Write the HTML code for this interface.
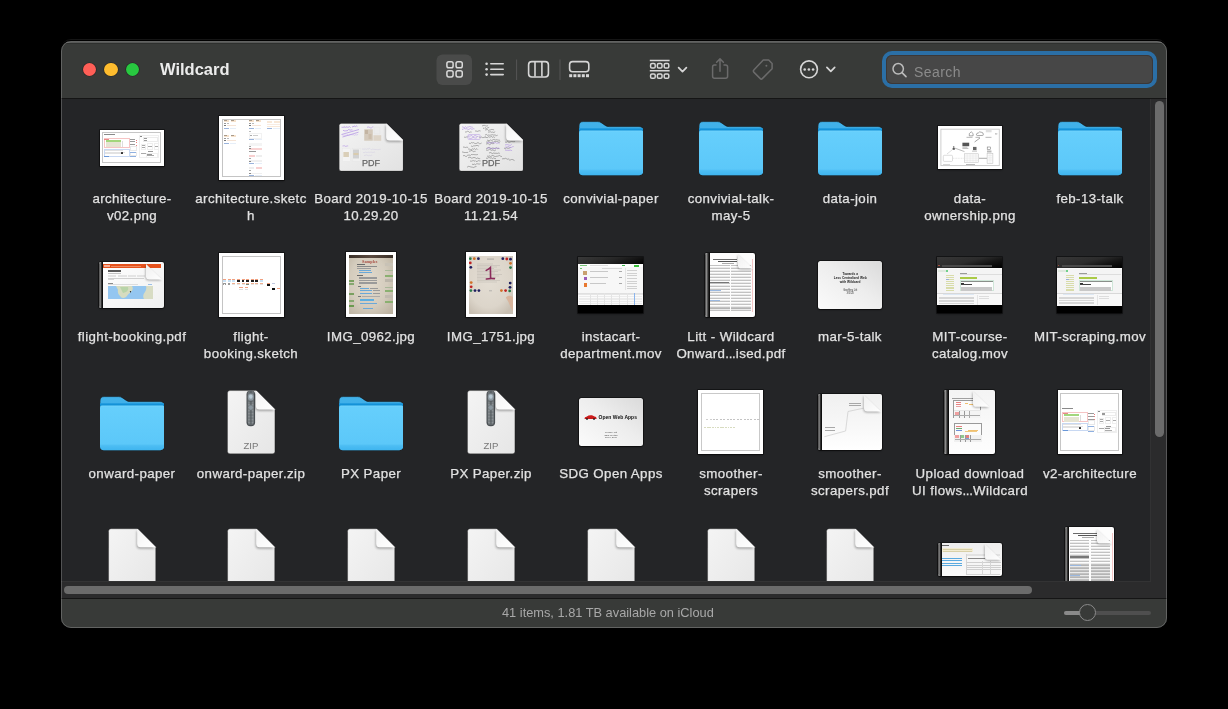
<!DOCTYPE html><html><head><meta charset="utf-8"><style>
html,body{margin:0;padding:0;background:#000;width:1228px;height:709px;overflow:hidden}
*{box-sizing:border-box}
body{font-family:"Liberation Sans",sans-serif;position:relative}
#win{position:absolute;left:61px;top:41px;width:1106px;height:587px;border-radius:10px;overflow:hidden;background:#242527;box-shadow:0 0 0 1px #000,0 -2px 0 0 #151515}
#wb{position:absolute;left:61px;top:41px;width:1106px;height:587px;border-radius:10px;border:1px solid rgba(255,255,255,0.21);pointer-events:none}
.a{position:absolute}
.ib{position:absolute;width:64px;height:64px}
.ib svg{display:block}
.th{position:absolute;overflow:hidden}
.el{letter-spacing:-0.4px;margin-right:0.6px}
.lb{position:absolute;width:118px;text-align:center;font-size:13.3px;letter-spacing:0.4px;line-height:17px;color:#e2e2e2;white-space:nowrap;-webkit-text-stroke:0.25px #e2e2e2;will-change:transform}
</style></head><body>
<div id="win">
<div class="a" style="left:0;top:0;width:1106px;height:57px;background:#383a38"></div>
<div class="a" style="left:0;top:1px;width:1106px;height:1px;background:rgba(255,255,255,0.16)"></div>
<div class="a" style="left:0;top:2px;width:1106px;height:1px;background:#2e302e"></div>
<div class="a" style="left:0;top:57px;width:1106px;height:1px;background:#151515"></div>
<div class="a" style="left:1089px;top:58px;width:17px;height:499px;background:#2b2b2c;border-left:1px solid #323233"></div>
<div class="a" style="left:0;top:540px;width:1106px;height:17px;background:#2b2b2c"></div>
<div class="a" style="left:0;top:540px;width:1090px;height:1px;background:#333334"></div>
<div class="a" style="left:0;top:557px;width:1106px;height:1px;background:#151515"></div>
<div class="a" style="left:0;top:558px;width:1106px;height:30px;background:#383a38"></div>
</div>
<div class="a" style="left:82.7px;top:62.9px;width:13.6px;height:13.6px;border-radius:50%;background:#ff5f57;box-shadow:0 0 0 0.6px rgba(0,0,0,0.35)"></div>
<div class="a" style="left:104.4px;top:62.9px;width:13.6px;height:13.6px;border-radius:50%;background:#febc2e;box-shadow:0 0 0 0.6px rgba(0,0,0,0.35)"></div>
<div class="a" style="left:125.9px;top:62.9px;width:13.6px;height:13.6px;border-radius:50%;background:#28c840;box-shadow:0 0 0 0.6px rgba(0,0,0,0.35)"></div>
<div class="a" style="left:160px;top:60px;font-size:16.5px;font-weight:bold;color:#ececec;line-height:19px;will-change:transform">Wildcard</div>
<svg class="a" style="left:0;top:0" width="1228" height="110" viewBox="0 0 1228 110">
<rect x="436.5" y="54.5" width="35.5" height="30.5" rx="6" fill="#4a4b4a"/>
<g fill="none" stroke="#dadada" stroke-width="1.5">
<rect x="446.9" y="61.65" width="6.2" height="6.2" rx="1.8"/><rect x="456.05" y="61.65" width="6.2" height="6.2" rx="1.8"/>
<rect x="446.9" y="70.7" width="6.2" height="6.2" rx="1.8"/><rect x="456.05" y="70.7" width="6.2" height="6.2" rx="1.8"/>
</g>
<g fill="#d6d6d6"><circle cx="486.6" cy="63.7" r="1.3"/><circle cx="486.6" cy="69.2" r="1.3"/><circle cx="486.6" cy="74.6" r="1.3"/></g>
<g stroke="#d6d6d6" stroke-width="1.6" stroke-linecap="round"><path d="M490.8,63.7 H503.2 M490.8,69.2 H503.2 M490.8,74.6 H503.2"/></g>
<path d="M516.6,59.5 V80" stroke="#555" stroke-width="1"/>
<path d="M560,59.5 V80" stroke="#555" stroke-width="1"/>
<g fill="none" stroke="#d6d6d6" stroke-width="1.6">
<rect x="528.6" y="61.6" width="19.8" height="15.4" rx="3.2"/><path d="M535,62 V76.6 M541.9,62 V76.6"/>
<rect x="569.6" y="61.6" width="19.2" height="10.2" rx="3"/>
</g>
<g fill="#d6d6d6"><rect x="569.2" y="74.2" width="3" height="3"/><rect x="573.4" y="74.2" width="3" height="3"/><rect x="577.6" y="74.2" width="3" height="3"/><rect x="581.8" y="74.2" width="3" height="3"/><rect x="586" y="74.2" width="3" height="3"/></g>
<g fill="none" stroke="#d6d6d6" stroke-width="1.5">
<path d="M649.8,60.4 H669.6 M649.8,70.7 H669.6"/>
<rect x="650.6" y="63.6" width="4.6" height="4.4" rx="1.3"/><rect x="657.4" y="63.6" width="4.6" height="4.4" rx="1.3"/><rect x="664.2" y="63.6" width="4.6" height="4.4" rx="1.3"/>
<rect x="650.6" y="73.9" width="4.6" height="4.4" rx="1.3"/><rect x="657.4" y="73.9" width="4.6" height="4.4" rx="1.3"/><rect x="664.2" y="73.9" width="4.6" height="4.4" rx="1.3"/>
</g>
<path d="M678.6,67.6 L682.5,71.6 L686.4,67.6" fill="none" stroke="#d6d6d6" stroke-width="1.7" stroke-linecap="round" stroke-linejoin="round"/>
<g fill="none" stroke="#6b6b6b" stroke-width="1.5" stroke-linecap="round" stroke-linejoin="round">
<path d="M716,65 H714.5 Q712.6,65 712.6,67 V76.2 Q712.6,78.2 714.5,78.2 H725.5 Q727.6,78.2 727.6,76.2 V67 Q727.6,65 725.5,65 H724"/>
<path d="M720,71.3 V59 M716.6,62.3 L720,58.9 L723.4,62.3"/>
<path d="M763.3,60.1 L768.7,60.1 L772.1,63.6 L772.1,68.8 L762.3,78.6 Q761.3,79.6 760.3,78.6 L753.8,72.1 Q752.8,71.1 753.8,70.1 Z"/>
</g>
<circle cx="766.4" cy="65.7" r="1" fill="#6b6b6b"/>
<circle cx="809" cy="69.3" r="8.4" fill="none" stroke="#d6d6d6" stroke-width="1.6"/>
<g fill="#d6d6d6"><circle cx="804.7" cy="69.5" r="1.3"/><circle cx="808.9" cy="69.5" r="1.3"/><circle cx="813.1" cy="69.5" r="1.3"/></g>
<path d="M826.9,67.4 L830.8,71.3 L834.7,67.4" fill="none" stroke="#d6d6d6" stroke-width="1.7" stroke-linecap="round" stroke-linejoin="round"/>
</svg>
<div class="a" style="left:882px;top:51px;width:275px;height:37px;border-radius:10px;background:#2b6fa6"></div>
<div class="a" style="left:886px;top:55px;width:267px;height:29px;border-radius:6px;background:#474747;box-shadow:inset 0 0 0 1px #3b3838"></div>
<svg class="a" style="left:888px;top:58px" width="24" height="24" viewBox="888 58 24 24"><circle cx="898.2" cy="68.8" r="5.2" fill="none" stroke="#bcbcbc" stroke-width="1.5"/><path d="M902,72.6 L906,76.6" stroke="#bcbcbc" stroke-width="1.6" stroke-linecap="round"/></svg>
<div class="a" style="left:913.8px;top:63.5px;font-size:14px;letter-spacing:0.45px;line-height:17px;color:#8b8b8b;will-change:transform">Search</div>
<div class="a" style="left:1155px;top:101px;width:9px;height:336px;border-radius:4.5px;background:#6b6b6b"></div>
<div class="a" style="left:64.3px;top:585.8px;width:968px;height:8.5px;border-radius:4.25px;background:#6b6b6b"></div>
<div class="a" style="left:502px;top:605px;font-size:12.8px;line-height:16px;color:#a8a8a8;will-change:transform">41 items, 1.81 TB available on iCloud</div>
<div class="a" style="left:1063.5px;top:610.8px;width:87px;height:4px;border-radius:2px;background:#4f4f4f"></div>
<div class="a" style="left:1063.5px;top:610.8px;width:24px;height:4px;border-radius:2px;background:#8a8a8a"></div>
<div class="a" style="left:1078.5px;top:604.3px;width:17px;height:17px;border-radius:50%;background:#383a38;border:1.5px solid #8a8a8a"></div>
<div class="a" style="left:62px;top:99px;width:1088px;height:482px;overflow:hidden">
<div class="th" style="left:37.8px;top:30.7px;width:64.1px;height:36.3px;background:#fff;box-shadow:0 0 0 0.8px rgba(0,0,0,0.55),0 1px 2px rgba(0,0,0,0.45);"><div style="position:absolute;left:2.7px;top:2.7px;right:2.7px;bottom:2.7px;border:1.0px solid #c6c6c6"></div><div style="position:absolute;left:4.3px;top:4.0px;width:10.9px;height:1.2px;background:#8a8a8a"></div><div style="position:absolute;left:4.3px;top:8.4px;width:25.5px;height:10px;border:1px solid #f6c4c4"></div><div style="position:absolute;left:4.6px;top:9.0px;width:5px;height:0.8px;background:#e88a8a"></div><div style="position:absolute;left:6.2px;top:10.5px;width:15.2px;height:1.7px;background:#a2d67c"></div><div style="position:absolute;left:6.2px;top:12.6px;width:15.2px;height:5px;background:#e6e4d2"></div><div style="position:absolute;left:22.3px;top:10.9px;width:1px;height:6px;background:#ddd"></div><div style="position:absolute;left:4.3px;top:19.0px;width:25.5px;height:8.6px;border:1px solid #c8d8f2"></div><div style="position:absolute;left:5.3px;top:20.4px;width:18px;height:0.5px;background:#e2e2e2"></div><div style="position:absolute;left:5.3px;top:21.9px;width:20px;height:0.5px;background:#e2e2e2"></div><div style="position:absolute;left:5.3px;top:23.4px;width:17px;height:0.5px;background:#e2e2e2"></div><div style="position:absolute;left:21.1px;top:22.7px;width:2.2px;height:2.1px;background:#222;border-radius:40%"></div><div style="position:absolute;left:4.6px;top:26.3px;width:5px;height:0.8px;background:#6a98d8"></div><div style="position:absolute;left:30.1px;top:9.3px;width:5.5px;height:0.8px;background:#9a9a9a"></div><div style="position:absolute;left:35.8px;top:9.9px;width:1.5px;height:0.5px;background:#e88080"></div><div style="position:absolute;left:30.1px;top:11.8px;width:5.5px;height:0.8px;background:#9a9a9a"></div><div style="position:absolute;left:35.8px;top:12.4px;width:1.5px;height:0.5px;background:#e88080"></div><div style="position:absolute;left:30.1px;top:14.6px;width:5.5px;height:0.8px;background:#9a9a9a"></div><div style="position:absolute;left:35.8px;top:15.2px;width:1.5px;height:0.5px;background:#e88080"></div><div style="position:absolute;left:30.3px;top:16.2px;width:7px;height:5px;border:1px solid #e8e8e8"></div><div style="position:absolute;left:30.3px;top:22.1px;width:7px;height:4.6px;border:1px solid #e8e8e8"></div><div style="position:absolute;left:30.3px;top:22.3px;width:6px;height:0.5px;background:#8fb0e0"></div><div style="position:absolute;left:30.3px;top:26.7px;width:6px;height:0.5px;background:#8fb0e0"></div><div style="position:absolute;left:39.4px;top:5.6px;width:19.6px;height:23px;border:1px solid #efefef"></div><div style="position:absolute;left:40.3px;top:6.7px;width:2px;height:0.7px;background:#888"></div><div style="position:absolute;left:43.6px;top:7.7px;width:14.6px;height:4.6px;border:1px solid #ececec"></div><div style="position:absolute;left:44.3px;top:8.7px;width:3px;height:0.6px;background:#999"></div><div style="position:absolute;left:44.3px;top:10.0px;width:2.5px;height:0.6px;background:#999"></div><div style="position:absolute;left:41.3px;top:13.9px;width:5px;height:6.5px;border:1px solid #eeeeee"></div><div style="position:absolute;left:41.8px;top:15.4px;width:3.5px;height:0.6px;background:#aaa"></div><div style="position:absolute;left:41.8px;top:17.4px;width:3.5px;height:0.6px;background:#aaa"></div><div style="position:absolute;left:47.3px;top:13.4px;width:6px;height:7px;border:1px solid #eeeeee"></div><div style="position:absolute;left:48.3px;top:16.2px;width:4px;height:0.6px;background:#aaa"></div><div style="position:absolute;left:54.3px;top:13.4px;width:4.5px;height:7px;border:1px solid #eeeeee"></div><div style="position:absolute;left:54.8px;top:16.4px;width:3px;height:0.6px;background:#aaa"></div><div style="position:absolute;left:48.3px;top:21.6px;width:4.5px;height:0.7px;background:#999"></div><div style="position:absolute;left:40.8px;top:23.7px;width:5px;height:0.6px;background:#aaa"></div><div style="position:absolute;left:46.0px;top:23.0px;width:12.5px;height:5px;border:1px solid #eeeeee"></div><div style="position:absolute;left:46.8px;top:24.4px;width:5px;height:0.6px;background:#999"></div><div style="position:absolute;left:46.8px;top:25.8px;width:7px;height:0.6px;background:#aaa"></div></div>
<div class="th" style="left:157.2px;top:16.5px;width:64.8px;height:64.4px;background:#fff;box-shadow:0 0 0 0.8px rgba(0,0,0,0.55),0 1px 2px rgba(0,0,0,0.45);"><div style="position:absolute;left:3.0px;top:3.0px;right:3.0px;bottom:3.0px;border:1.0px solid #c4c4c4"></div><div style="position:absolute;left:4.9px;top:4.4px;width:5px;height:2.2px;background:#f6e2cc"></div><div style="position:absolute;left:11.4px;top:4.4px;width:5.5px;height:2.2px;background:#f6e2cc"></div><div style="position:absolute;left:4.9px;top:4.7px;width:2.5px;height:0.6px;background:#a89a8a"></div><div style="position:absolute;left:11.4px;top:4.7px;width:3px;height:0.6px;background:#a89a8a"></div><div style="position:absolute;left:4.9px;top:7.6000000000000005px;width:1.5px;height:0.6px;background:#999"></div><div style="position:absolute;left:7.9px;top:7.6000000000000005px;width:2px;height:0.6px;background:#bbb"></div><div style="position:absolute;left:4.9px;top:9.7px;width:1.6px;height:1.2px;background:#777"></div><div style="position:absolute;left:7.4px;top:9.7px;width:9.5px;height:1.2px;background:#f6e4d6"></div><div style="position:absolute;left:4.9px;top:12.700000000000001px;width:5px;height:1.1px;background:#9bb4dc"></div><div style="position:absolute;left:10.4px;top:12.700000000000001px;width:6.5px;height:1.1px;background:#e6eef8"></div><div style="position:absolute;left:4.9px;top:19.3px;width:5px;height:2.2px;background:#f6e2cc"></div><div style="position:absolute;left:11.4px;top:19.3px;width:5.5px;height:2.2px;background:#f6e2cc"></div><div style="position:absolute;left:4.9px;top:19.6px;width:2.5px;height:0.6px;background:#a89a8a"></div><div style="position:absolute;left:11.4px;top:19.6px;width:3px;height:0.6px;background:#a89a8a"></div><div style="position:absolute;left:4.9px;top:22.5px;width:1.5px;height:0.6px;background:#999"></div><div style="position:absolute;left:7.9px;top:22.5px;width:2px;height:0.6px;background:#bbb"></div><div style="position:absolute;left:4.9px;top:24.6px;width:1.6px;height:1.2px;background:#777"></div><div style="position:absolute;left:7.4px;top:24.6px;width:9.5px;height:1.2px;background:#f6e4d6"></div><div style="position:absolute;left:4.9px;top:27.6px;width:5px;height:1.1px;background:#9bb4dc"></div><div style="position:absolute;left:10.4px;top:27.6px;width:6.5px;height:1.1px;background:#e6eef8"></div><div style="position:absolute;left:30px;top:4.4px;width:5px;height:2.2px;background:#f6e2cc"></div><div style="position:absolute;left:36.5px;top:4.4px;width:5.5px;height:2.2px;background:#f6e2cc"></div><div style="position:absolute;left:30px;top:4.7px;width:2.5px;height:0.6px;background:#a89a8a"></div><div style="position:absolute;left:36.5px;top:4.7px;width:3px;height:0.6px;background:#a89a8a"></div><div style="position:absolute;left:30px;top:7.6000000000000005px;width:1.5px;height:0.6px;background:#999"></div><div style="position:absolute;left:33px;top:7.6000000000000005px;width:2px;height:0.6px;background:#bbb"></div><div style="position:absolute;left:30px;top:9.7px;width:1.6px;height:1.2px;background:#777"></div><div style="position:absolute;left:32.5px;top:9.7px;width:9.5px;height:1.2px;background:#f6e4d6"></div><div style="position:absolute;left:30px;top:12.700000000000001px;width:5px;height:1.1px;background:#9bb4dc"></div><div style="position:absolute;left:35.5px;top:12.700000000000001px;width:6.5px;height:1.1px;background:#e6eef8"></div><div style="position:absolute;left:30px;top:15.5px;width:2px;height:0.6px;background:#bbb"></div><div style="position:absolute;left:30px;top:17.8px;width:12.5px;height:6px;border:1px solid #f2f2f2"></div><div style="position:absolute;left:31px;top:19.6px;width:2px;height:0.6px;background:#aaa"></div><div style="position:absolute;left:34px;top:19.6px;width:5px;height:0.6px;background:#ccc"></div><div style="position:absolute;left:30px;top:23.6px;width:5px;height:1.1px;background:#9bb4dc"></div><div style="position:absolute;left:35.5px;top:23.6px;width:7px;height:1.1px;background:#e6eef8"></div><div style="position:absolute;left:30px;top:27px;width:12.5px;height:3.2px;background:#f4f4f4"></div><div style="position:absolute;left:30px;top:30.8px;width:2px;height:0.6px;background:#aaa"></div><div style="position:absolute;left:30px;top:32.3px;width:12.5px;height:1.8px;background:#f8d4d4"></div><div style="position:absolute;left:30px;top:32.5px;width:2px;height:1px;background:#888"></div><div style="position:absolute;left:30px;top:35.3px;width:7px;height:0.7px;background:#999"></div><div style="position:absolute;left:30px;top:39.6px;width:5.5px;height:2.2px;background:#f8d0d0"></div><div style="position:absolute;left:36.5px;top:39.6px;width:6px;height:2.2px;background:#eeeeee"></div><div style="position:absolute;left:30px;top:42.6px;width:2px;height:0.6px;background:#aaa"></div><div style="position:absolute;left:30px;top:44.8px;width:12.5px;height:1.6px;background:#f0f0f0"></div><div style="position:absolute;left:30px;top:45px;width:2px;height:1px;background:#888"></div><div style="position:absolute;left:30px;top:47.6px;width:5px;height:0.9px;background:#9bb4dc"></div><div style="position:absolute;left:35.5px;top:47.6px;width:7px;height:0.9px;background:#e6eef8"></div><div style="position:absolute;left:30px;top:51.8px;width:5px;height:2.2px;background:#eeeeee"></div><div style="position:absolute;left:36.5px;top:51.8px;width:6px;height:2.2px;background:#f8d0d0"></div><div style="position:absolute;left:30px;top:54.8px;width:2px;height:0.6px;background:#aaa"></div><div style="position:absolute;left:30px;top:57px;width:12.5px;height:1.6px;background:#f0f0f0"></div><div style="position:absolute;left:30px;top:57.2px;width:2px;height:1px;background:#888"></div><div style="position:absolute;left:30px;top:59.8px;width:5px;height:0.9px;background:#9bb4dc"></div><div style="position:absolute;left:35.5px;top:59.8px;width:7px;height:0.9px;background:#e6eef8"></div><div style="position:absolute;left:48.2px;top:5px;width:5px;height:2px;background:#f8e8d8"></div><div style="position:absolute;left:54.5px;top:5px;width:6px;height:2px;background:#f8e8d8"></div><div style="position:absolute;left:48.2px;top:8px;width:12.5px;height:1.2px;background:#f8ece2"></div><div style="position:absolute;left:48.2px;top:10px;width:12.5px;height:1.5px;background:#f8e8d8"></div><div style="position:absolute;left:48.2px;top:12.2px;width:5px;height:1px;background:#9bb4dc"></div><div style="position:absolute;left:53.5px;top:12.2px;width:7px;height:1px;background:#e6eef8"></div></div>
<div class="ib" style="left:277.1px;top:16.3px"><svg width="64" height="64" viewBox="0 0 64 64"><defs><linearGradient id="pg" x1="0" y1="0" x2="1" y2="1"><stop offset="0" stop-color="#f4f4f4"/><stop offset="1" stop-color="#e6e6e6"/></linearGradient>
<linearGradient id="fold" x1="0" y1="0" x2="1" y2="1"><stop offset="0" stop-color="#f2f2f2"/><stop offset="0.6" stop-color="#fbfbfb"/><stop offset="1" stop-color="#ffffff"/></linearGradient>
<filter id="fs" x="-50%" y="-50%" width="200%" height="200%"><feGaussianBlur stdDeviation="1.1"/></filter>
<linearGradient id="bp" x1="0" y1="0" x2="1" y2="1"><stop offset="0" stop-color="#f4f4f4"/><stop offset="1" stop-color="#e2e2e2"/></linearGradient></defs>
<path d="M2.4000000000000004,8.4 L47.099999999999994,8.4 L64.3,25.6 L64.3,53.9 Q64.3,56.1 62.099999999999994,56.1 L2.4000000000000004,56.1 Q0.2,56.1 0.2,53.9 L0.2,10.600000000000001 Q0.2,8.4 2.4000000000000004,8.4 Z" fill="url(#bp)" stroke="#111" stroke-opacity="0.35" stroke-width="0.8"/>
<g opacity="0.9"><path d="M2.5,12.2 L3.3,12.3 L4.3,12.4 L5.3,11.5 L6.0,12.7 L6.9,11.8 L8.2,12.2 L9.4,12.2 L10.5,11.6 L11.6,12.8" fill="none" stroke="#9a6ee0" stroke-width="0.6"/><path d="M13.0,11.6 L14.0,12.0 L15.1,10.9 L16.3,11.7 L17.2,10.8 L18.4,11.6" fill="none" stroke="#9a6ee0" stroke-width="0.6"/><path d="M4.0,15.2 L5.1,15.8 L6.3,15.9 L7.2,15.7 L8.2,15.9 L9.4,14.6 L10.2,14.7 L11.5,15.1 L12.5,14.9 L13.5,15.0" fill="none" stroke="#9a6ee0" stroke-width="0.6"/><path d="M2.5,19.5 L20,14.5 M3.5,22 L19.5,17.2" stroke="#9a6ee0" stroke-width="0.6" fill="none"/><path d="M3.0,19.8 L3.9,19.9 L5.0,20.2 L6.1,20.2 L7.3,20.3 L8.4,19.5 L9.6,20.3 L10.8,19.9 L12.0,19.5 L13.2,19.9 L14.0,19.4 L15.3,20.3 L16.0,20.1 L17.0,19.5 L17.8,20.1 L19.1,19.3" fill="none" stroke="#b090e8" stroke-width="0.4"/><path d="M28.0,12.4 L29.1,11.9 L30.2,12.2 L31.4,12.9 L32.4,12.9 L33.3,12.0 L34.4,11.9" fill="none" stroke="#9a6ee0" stroke-width="0.5"/><rect x="25.2" y="14.3" width="8.6" height="11.4" fill="#d2c6b6"/><rect x="26" y="15" width="3" height="4" fill="#bfae9a"/><rect x="29.5" y="19" width="3" height="5" fill="#c8b8a4"/><rect x="34.4" y="20.2" width="7.8" height="5.6" fill="#dcd2c4"/><rect x="35" y="12" width="6" height="7" fill="#ececec" stroke="#ddd" stroke-width="0.3"/><path d="M3.5,31.0 L4.3,30.9 L5.4,30.7 L6.1,31.3 L7.0,31.4 L8.2,30.9 L9.2,31.0" fill="none" stroke="#9a6ee0" stroke-width="0.5"/><rect x="3.4" y="33.5" width="8" height="13" fill="#f4f4f4" stroke="#e0e0e0" stroke-width="0.3"/><rect x="4.4" y="37" width="5.5" height="5" fill="#d8ccb4"/><rect x="13.2" y="33.5" width="8" height="13" fill="#f0f0f0" stroke="#e0e0e0" stroke-width="0.3"/><rect x="14" y="34.5" width="6" height="9" fill="#cfcfcf"/><rect x="14.5" y="38" width="5" height="2" fill="#d8c8a8"/><path d="M23.0,34.0 L24.1,34.1 L25.1,34.1 L26.4,34.0 L27.3,34.3 L28.2,33.8 L29.5,34.0 L30.5,33.4 L31.5,34.1" fill="none" stroke="#c4bce0" stroke-width="0.35"/><path d="M32.0,34.5 L32.7,34.6 L33.8,34.0 L34.9,34.5 L36.0,34.3 L37.1,34.8 L37.8,34.0 L38.9,35.1 L39.8,34.4 L40.8,34.3 L41.7,34.3" fill="none" stroke="#c4bce0" stroke-width="0.35"/><path d="M24.0,37.5 L24.9,37.6 L25.8,37.4 L27.0,36.9 L28.0,37.8 L28.9,37.2 L30.1,37.2 L30.9,37.4 L32.0,37.0 L32.9,37.3 L34.1,37.4 L35.3,37.1 L36.2,37.7" fill="none" stroke="#c4bce0" stroke-width="0.35"/><path d="M25.0,40.5 L26.2,40.4 L27.1,40.0 L28.1,40.1 L29.3,40.9 L30.1,40.2 L31.3,40.7 L32.4,40.3 L33.2,40.3" fill="none" stroke="#c4bce0" stroke-width="0.35"/></g>
<path d="M47.099999999999994,8.4 L47.099999999999994,22.1 Q47.099999999999994,25.6 50.599999999999994,25.6 L64.3,25.6 Z" fill="#000" opacity="0.30" filter="url(#fs)" transform="translate(-0.6,1.4)"/><path d="M47.099999999999994,8.4 L47.099999999999994,22.1 Q47.099999999999994,25.6 50.599999999999994,25.6 L64.3,25.6 Z" fill="url(#fold)"/><path d="M47.39999999999999,8.700000000000001 L64.0,25.3" stroke="#fff" stroke-width="0.8"/>
<text x="32.0" y="51.2" text-anchor="middle" font-family="Liberation Sans" font-size="9.0" fill="#666" stroke="#666" stroke-width="0.25">PDF</text>
</svg></div>
<div class="ib" style="left:396.9px;top:16.3px"><svg width="64" height="64" viewBox="0 0 64 64"><defs><linearGradient id="pg" x1="0" y1="0" x2="1" y2="1"><stop offset="0" stop-color="#f4f4f4"/><stop offset="1" stop-color="#e6e6e6"/></linearGradient>
<linearGradient id="fold" x1="0" y1="0" x2="1" y2="1"><stop offset="0" stop-color="#f2f2f2"/><stop offset="0.6" stop-color="#fbfbfb"/><stop offset="1" stop-color="#ffffff"/></linearGradient>
<filter id="fs" x="-50%" y="-50%" width="200%" height="200%"><feGaussianBlur stdDeviation="1.1"/></filter>
<linearGradient id="bp" x1="0" y1="0" x2="1" y2="1"><stop offset="0" stop-color="#f4f4f4"/><stop offset="1" stop-color="#e2e2e2"/></linearGradient></defs>
<path d="M2.4000000000000004,8.4 L47.099999999999994,8.4 L64.3,25.6 L64.3,53.9 Q64.3,56.1 62.099999999999994,56.1 L2.4000000000000004,56.1 Q0.2,56.1 0.2,53.9 L0.2,10.600000000000001 Q0.2,8.4 2.4000000000000004,8.4 Z" fill="url(#bp)" stroke="#111" stroke-opacity="0.35" stroke-width="0.8"/>
<g opacity="0.85"><path d="M23.0,11.0 L24.1,10.5 L25.4,10.4 L26.6,10.8 L27.5,11.0 L28.3,10.9 L29.1,10.4" fill="none" stroke="#505050" stroke-width="0.5"/><path d="M24.0,13.0 L25.1,13.5 L26.0,12.6 L27.3,13.6 L28.6,12.9 L30.2,12.4" fill="none" stroke="#505050" stroke-width="0.5"/><path d="M26.0,15.0 L27.5,14.7 L28.4,14.5 L29.4,15.4 L30.4,15.1 L31.7,14.8 L32.9,14.4 L33.8,14.6 L35.1,14.9" fill="none" stroke="#505050" stroke-width="0.5"/><path d="M29.0,17.0 L30.1,17.1 L31.2,16.7 L32.6,17.3 L33.6,17.1 L34.9,17.5 L36.2,16.7" fill="none" stroke="#505050" stroke-width="0.5"/><path d="M26.0,20.0 L27.6,19.5 L28.7,20.4 L29.6,20.0 L30.5,20.2 L31.9,20.1 L33.4,19.7 L34.7,20.1 L36.0,19.9 L37.5,20.6 L38.7,20.2" fill="none" stroke="#505050" stroke-width="0.5"/><path d="M26.0,22.0 L26.8,22.3 L28.2,22.7 L29.6,21.7 L30.7,22.2 L31.6,21.9 L32.5,21.5 L33.3,22.4 L34.2,21.6 L35.3,22.5 L36.2,21.9" fill="none" stroke="#505050" stroke-width="0.5"/><path d="M28.0,25.0 L29.2,25.5 L30.7,25.5 L31.7,24.9 L32.8,25.5 L34.4,24.5 L35.3,24.6 L36.3,25.0 L37.6,24.7 L38.4,24.9 L39.5,25.1 L41.0,25.3" fill="none" stroke="#505050" stroke-width="0.5"/><path d="M27.0,27.0 L28.2,27.2 L29.6,26.4 L31.1,27.4 L32.6,27.4 L33.7,26.9 L34.6,27.2 L35.4,26.4 L36.4,26.5 L37.5,26.4 L38.3,26.5 L39.1,26.8 L40.0,27.5 L41.3,26.5" fill="none" stroke="#505050" stroke-width="0.5"/><path d="M27.0,29.0 L28.0,28.8 L29.1,28.5 L30.6,29.7 L31.7,29.0 L32.6,28.4 L33.7,28.7 L35.2,28.5" fill="none" stroke="#505050" stroke-width="0.5"/><path d="M27.0,33.0 L27.8,33.6 L29.0,32.5 L30.3,32.3 L31.5,33.7 L33.0,33.3 L34.0,32.8 L34.9,33.4 L36.2,33.4 L37.2,32.6 L38.7,33.7 L40.2,33.4" fill="none" stroke="#505050" stroke-width="0.5"/><path d="M27.0,35.0 L28.5,35.3 L29.4,35.0 L30.5,34.3 L31.3,34.7 L32.4,35.3 L33.9,34.9 L35.5,35.7 L37.0,34.8" fill="none" stroke="#505050" stroke-width="0.5"/><path d="M30.0,38.0 L31.0,37.6 L31.9,37.6 L33.2,38.6 L34.7,38.0 L36.0,38.4 L36.9,38.2 L38.4,38.4 L39.8,38.0 L40.8,38.4" fill="none" stroke="#505050" stroke-width="0.5"/><path d="M28.0,41.0 L29.1,41.4 L30.6,40.9 L31.8,41.6 L33.1,40.5 L34.0,40.5 L35.6,41.4 L36.5,41.5 L38.1,41.2 L39.2,41.1 L40.1,40.3 L41.6,41.2 L42.9,41.6" fill="none" stroke="#505050" stroke-width="0.5"/><path d="M27.0,43.0 L28.1,43.5 L29.6,42.6 L30.6,42.7 L31.6,43.1 L32.6,42.9 L33.5,43.6 L34.6,42.9 L35.9,43.6 L37.0,43.6" fill="none" stroke="#505050" stroke-width="0.5"/><path d="M6.0,17.0 L7.2,17.0 L8.4,16.3 L9.6,16.6 L10.4,17.4 L11.3,17.0 L12.7,17.1" fill="none" stroke="#505050" stroke-width="0.5"/><path d="M16.0,16.0 L17.1,16.0 L18.3,16.4 L19.2,16.1 L20.2,15.7 L21.6,16.0" fill="none" stroke="#505050" stroke-width="0.5"/><path d="M5.0,22.0 L6.2,22.4 L7.8,21.9 L9.1,22.0" fill="none" stroke="#505050" stroke-width="0.5"/><path d="M20.0,22.0 L21.2,22.3 L22.4,22.0 L23.6,22.6 L24.9,22.5 L26.5,21.7" fill="none" stroke="#505050" stroke-width="0.5"/><path d="M10.0,28.0 L11.2,28.6 L12.7,27.5 L13.6,27.9 L14.5,27.6 L15.3,28.2 L16.8,28.6 L17.7,28.3 L19.0,27.5 L20.5,28.7 L21.5,28.6 L22.6,28.0" fill="none" stroke="#505050" stroke-width="0.5"/><path d="M12.0,31.0 L13.6,31.5 L14.5,30.9 L15.7,30.8 L16.7,30.7 L18.1,30.3 L19.3,30.9 L20.1,30.8" fill="none" stroke="#505050" stroke-width="0.5"/><path d="M9.0,34.0 L10.3,34.0 L11.2,34.7 L12.6,34.7 L13.5,33.7 L14.3,34.4 L15.3,33.5 L16.5,34.6 L17.9,33.7 L18.8,34.6" fill="none" stroke="#505050" stroke-width="0.5"/><path d="M10.0,36.0 L11.3,36.3 L12.1,35.4 L13.5,35.9 L14.3,36.6 L15.6,36.4 L16.5,36.5" fill="none" stroke="#505050" stroke-width="0.5"/><path d="M8.0,40.0 L8.9,40.5 L10.0,39.8 L11.3,40.6 L12.3,39.5 L13.5,39.6 L14.4,39.5 L15.2,39.6 L16.3,39.7 L17.7,39.7 L18.9,39.5" fill="none" stroke="#505050" stroke-width="0.5"/><path d="M9.0,43.0 L10.1,42.3 L11.1,42.3 L12.5,43.1 L13.4,43.0 L15.0,42.4 L16.4,42.9 L17.6,43.5 L18.7,43.0 L20.1,43.7 L21.2,43.5" fill="none" stroke="#505050" stroke-width="0.5"/><path d="M11.0,46.0 L12.4,46.2 L13.5,45.8 L14.3,45.5 L15.2,46.3 L16.2,45.5 L17.1,46.5 L18.6,46.2 L19.6,45.6 L20.6,45.9 L21.5,45.9" fill="none" stroke="#505050" stroke-width="0.5"/><path d="M13.0,49.0 L14.0,49.6 L15.6,49.1 L16.6,49.7 L17.6,48.8 L18.4,48.8 L19.6,49.0 L20.6,49.0 L21.4,48.7" fill="none" stroke="#505050" stroke-width="0.5"/><path d="M8.0,52.0 L8.9,51.9 L9.7,51.3 L10.7,51.6 L12.0,52.0 L13.4,52.2 L14.8,52.5 L15.9,51.8 L17.5,51.5" fill="none" stroke="#505050" stroke-width="0.5"/><path d="M4.0,32.0 L5.4,32.2 L6.2,32.5 L7.7,32.2 L9.1,32.4" fill="none" stroke="#505050" stroke-width="0.5"/><path d="M3.0,37.0 L3.9,37.0 L5.1,37.5 L6.6,37.5 L7.8,37.5 L9.2,37.3" fill="none" stroke="#505050" stroke-width="0.5"/><path d="M4.0,41.0 L5.0,40.3 L5.9,40.8 L6.8,41.5 L8.0,41.2" fill="none" stroke="#505050" stroke-width="0.5"/><path d="M46.0,27.0 L47.3,27.3 L48.5,26.3 L49.9,27.3 L51.1,27.0 L52.5,26.4 L53.8,26.7 L54.7,26.7 L56.1,26.6" fill="none" stroke="#505050" stroke-width="0.5"/><path d="M45.0,33.0 L46.4,33.7 L47.6,32.8 L48.8,33.3 L50.2,33.2 L51.5,32.4" fill="none" stroke="#505050" stroke-width="0.5"/><path d="M43.0,44.0 L43.9,43.7 L45.3,43.7 L46.6,43.3 L47.4,43.7 L48.8,44.3 L50.1,43.7" fill="none" stroke="#505050" stroke-width="0.5"/><path d="M50.0,45.0 L51.2,45.0 L52.4,44.5 L53.9,44.6 L55.5,45.6" fill="none" stroke="#505050" stroke-width="0.5"/><path d="M3.0,12.0 L3.8,11.9 L5.3,12.7 L6.4,11.7 L7.4,12.6 L8.4,12.1 L9.3,12.0 L10.8,11.5 L12.3,12.0 L13.8,12.3" fill="none" stroke="#9a70e0" stroke-width="0.55"/><path d="M3.0,14.0 L4.0,14.6 L5.2,13.3 L6.0,14.0 L7.1,13.7 L8.1,13.8 L9.1,14.5 L9.9,14.4 L11.4,13.5 L12.9,14.3 L14.4,13.7 L15.5,13.9" fill="none" stroke="#9a70e0" stroke-width="0.55"/><path d="M9.0,21.0 L10.6,21.1 L11.7,20.9 L12.7,20.4 L13.6,21.5 L14.6,21.6 L15.6,20.7 L16.8,20.6 L17.9,21.6 L19.4,21.4" fill="none" stroke="#9a70e0" stroke-width="0.55"/><path d="M10.0,23.0 L11.3,23.6 L12.9,23.1 L14.2,22.4 L15.6,22.9 L17.0,23.2 L18.0,22.4" fill="none" stroke="#9a70e0" stroke-width="0.55"/><path d="M28.0,28.0 L29.5,27.5 L30.7,27.8 L31.8,28.3 L33.3,27.7 L34.7,27.7 L35.9,27.9 L36.8,27.5 L37.8,28.6 L39.0,27.6 L40.5,28.7" fill="none" stroke="#9a70e0" stroke-width="0.55"/><path d="M28.0,33.5 L29.2,33.0 L30.1,32.9 L31.2,32.9 L32.2,33.2 L33.4,34.0 L34.8,33.4 L36.0,33.5 L37.1,33.3 L37.9,33.2 L39.5,33.0 L40.7,33.7" fill="none" stroke="#9a70e0" stroke-width="0.55"/><path d="M46.0,30.0 L47.5,29.6 L48.5,29.6 L49.6,29.9 L51.2,30.5 L52.7,29.3" fill="none" stroke="#9a70e0" stroke-width="0.55"/><path d="M46.0,32.0 L46.8,32.3 L48.3,32.0 L49.6,31.3 L50.7,32.6 L52.2,32.5 L53.8,31.6 L54.7,31.5" fill="none" stroke="#9a70e0" stroke-width="0.55"/><path d="M46.0,35.0 L47.2,35.3 L48.8,35.3 L50.1,35.4 L51.3,35.1 L52.1,35.4 L53.1,35.6" fill="none" stroke="#9a70e0" stroke-width="0.55"/><rect x="9" y="19.5" width="12" height="5" rx="1" fill="none" stroke="#a888e0" stroke-width="0.5"/></g>
<path d="M47.099999999999994,8.4 L47.099999999999994,22.1 Q47.099999999999994,25.6 50.599999999999994,25.6 L64.3,25.6 Z" fill="#000" opacity="0.30" filter="url(#fs)" transform="translate(-0.6,1.4)"/><path d="M47.099999999999994,8.4 L47.099999999999994,22.1 Q47.099999999999994,25.6 50.599999999999994,25.6 L64.3,25.6 Z" fill="url(#fold)"/><path d="M47.39999999999999,8.700000000000001 L64.0,25.3" stroke="#fff" stroke-width="0.8"/>
<text x="32.0" y="51.2" text-anchor="middle" font-family="Liberation Sans" font-size="9.0" fill="#666" stroke="#666" stroke-width="0.25">PDF</text>
</svg></div>
<div class="ib" style="left:516.7px;top:16.3px"><svg width="64" height="64" viewBox="0 0 64 64">
<defs>
<linearGradient id="fb" x1="0" y1="0" x2="0" y2="1"><stop offset="0" stop-color="#42b2ea"/><stop offset="0.75" stop-color="#33a6e4"/><stop offset="1" stop-color="#2aa0e0"/></linearGradient>
<linearGradient id="fband" x1="0" y1="0" x2="0" y2="1"><stop offset="0" stop-color="#1f9ade"/><stop offset="1" stop-color="#0788d0"/></linearGradient>
<linearGradient id="ff" x1="0" y1="0" x2="0" y2="1"><stop offset="0" stop-color="#66cffc"/><stop offset="0.86" stop-color="#5cc8f9"/><stop offset="0.9" stop-color="#4cbdf3"/><stop offset="1" stop-color="#3fb5ef"/></linearGradient>
</defs>
<path d="M0,11 Q0,6.6 4.2,6.6 L18.5,6.6 Q20.8,6.6 22.6,7.9 L26.2,10.4 Q27.9,11.6 30.2,11.6 L60,11.6 Q64.3,11.6 64.3,16 L64.3,56.2 Q64.3,60.2 60.3,60.2 L4,60.2 Q0,60.2 0,56.2 Z" fill="url(#fb)" stroke="#140e0c" stroke-opacity="0.6" stroke-width="0.9"/>
<rect x="0" y="13.2" width="64.3" height="2.8" fill="url(#fband)"/>
<path d="M0,17.6 Q0,15.6 2,15.6 L62.3,15.6 Q64.3,15.6 64.3,17.6 L64.3,56.2 Q64.3,60.2 60.3,60.2 L4,60.2 Q0,60.2 0,56.2 Z" fill="url(#ff)"/>
<rect x="1" y="15.7" width="62.3" height="0.8" fill="#80d8fd" opacity="0.5"/>
</svg></div>
<div class="ib" style="left:636.5px;top:16.3px"><svg width="64" height="64" viewBox="0 0 64 64">
<defs>
<linearGradient id="fb" x1="0" y1="0" x2="0" y2="1"><stop offset="0" stop-color="#42b2ea"/><stop offset="0.75" stop-color="#33a6e4"/><stop offset="1" stop-color="#2aa0e0"/></linearGradient>
<linearGradient id="fband" x1="0" y1="0" x2="0" y2="1"><stop offset="0" stop-color="#1f9ade"/><stop offset="1" stop-color="#0788d0"/></linearGradient>
<linearGradient id="ff" x1="0" y1="0" x2="0" y2="1"><stop offset="0" stop-color="#66cffc"/><stop offset="0.86" stop-color="#5cc8f9"/><stop offset="0.9" stop-color="#4cbdf3"/><stop offset="1" stop-color="#3fb5ef"/></linearGradient>
</defs>
<path d="M0,11 Q0,6.6 4.2,6.6 L18.5,6.6 Q20.8,6.6 22.6,7.9 L26.2,10.4 Q27.9,11.6 30.2,11.6 L60,11.6 Q64.3,11.6 64.3,16 L64.3,56.2 Q64.3,60.2 60.3,60.2 L4,60.2 Q0,60.2 0,56.2 Z" fill="url(#fb)" stroke="#140e0c" stroke-opacity="0.6" stroke-width="0.9"/>
<rect x="0" y="13.2" width="64.3" height="2.8" fill="url(#fband)"/>
<path d="M0,17.6 Q0,15.6 2,15.6 L62.3,15.6 Q64.3,15.6 64.3,17.6 L64.3,56.2 Q64.3,60.2 60.3,60.2 L4,60.2 Q0,60.2 0,56.2 Z" fill="url(#ff)"/>
<rect x="1" y="15.7" width="62.3" height="0.8" fill="#80d8fd" opacity="0.5"/>
</svg></div>
<div class="ib" style="left:756.3px;top:16.3px"><svg width="64" height="64" viewBox="0 0 64 64">
<defs>
<linearGradient id="fb" x1="0" y1="0" x2="0" y2="1"><stop offset="0" stop-color="#42b2ea"/><stop offset="0.75" stop-color="#33a6e4"/><stop offset="1" stop-color="#2aa0e0"/></linearGradient>
<linearGradient id="fband" x1="0" y1="0" x2="0" y2="1"><stop offset="0" stop-color="#1f9ade"/><stop offset="1" stop-color="#0788d0"/></linearGradient>
<linearGradient id="ff" x1="0" y1="0" x2="0" y2="1"><stop offset="0" stop-color="#66cffc"/><stop offset="0.86" stop-color="#5cc8f9"/><stop offset="0.9" stop-color="#4cbdf3"/><stop offset="1" stop-color="#3fb5ef"/></linearGradient>
</defs>
<path d="M0,11 Q0,6.6 4.2,6.6 L18.5,6.6 Q20.8,6.6 22.6,7.9 L26.2,10.4 Q27.9,11.6 30.2,11.6 L60,11.6 Q64.3,11.6 64.3,16 L64.3,56.2 Q64.3,60.2 60.3,60.2 L4,60.2 Q0,60.2 0,56.2 Z" fill="url(#fb)" stroke="#140e0c" stroke-opacity="0.6" stroke-width="0.9"/>
<rect x="0" y="13.2" width="64.3" height="2.8" fill="url(#fband)"/>
<path d="M0,17.6 Q0,15.6 2,15.6 L62.3,15.6 Q64.3,15.6 64.3,17.6 L64.3,56.2 Q64.3,60.2 60.3,60.2 L4,60.2 Q0,60.2 0,56.2 Z" fill="url(#ff)"/>
<rect x="1" y="15.7" width="62.3" height="0.8" fill="#80d8fd" opacity="0.5"/>
</svg></div>
<div class="ib" style="left:995.9px;top:16.3px"><svg width="64" height="64" viewBox="0 0 64 64">
<defs>
<linearGradient id="fb" x1="0" y1="0" x2="0" y2="1"><stop offset="0" stop-color="#42b2ea"/><stop offset="0.75" stop-color="#33a6e4"/><stop offset="1" stop-color="#2aa0e0"/></linearGradient>
<linearGradient id="fband" x1="0" y1="0" x2="0" y2="1"><stop offset="0" stop-color="#1f9ade"/><stop offset="1" stop-color="#0788d0"/></linearGradient>
<linearGradient id="ff" x1="0" y1="0" x2="0" y2="1"><stop offset="0" stop-color="#66cffc"/><stop offset="0.86" stop-color="#5cc8f9"/><stop offset="0.9" stop-color="#4cbdf3"/><stop offset="1" stop-color="#3fb5ef"/></linearGradient>
</defs>
<path d="M0,11 Q0,6.6 4.2,6.6 L18.5,6.6 Q20.8,6.6 22.6,7.9 L26.2,10.4 Q27.9,11.6 30.2,11.6 L60,11.6 Q64.3,11.6 64.3,16 L64.3,56.2 Q64.3,60.2 60.3,60.2 L4,60.2 Q0,60.2 0,56.2 Z" fill="url(#fb)" stroke="#140e0c" stroke-opacity="0.6" stroke-width="0.9"/>
<rect x="0" y="13.2" width="64.3" height="2.8" fill="url(#fband)"/>
<path d="M0,17.6 Q0,15.6 2,15.6 L62.3,15.6 Q64.3,15.6 64.3,17.6 L64.3,56.2 Q64.3,60.2 60.3,60.2 L4,60.2 Q0,60.2 0,56.2 Z" fill="url(#ff)"/>
<rect x="1" y="15.7" width="62.3" height="0.8" fill="#80d8fd" opacity="0.5"/>
</svg></div>
<div class="th" style="left:876.1px;top:27.1px;width:64.0px;height:42.6px;background:#fff;box-shadow:0 0 0 0.8px rgba(0,0,0,0.55),0 1px 2px rgba(0,0,0,0.45);"><svg style="position:absolute;left:0;top:0" width="64" height="42.6" viewBox="0 0 64 42.6"><rect x="2.9" y="3.2" width="58.4" height="36.4" fill="none" stroke="#c8c8c8" stroke-width="0.9"/><g fill="none" stroke="#555" stroke-width="0.5"><path d="M31.3,9.8 L31.3,7.6 L33.2,5.8 L35.1,7.6 L35.1,9.8 Z"/><path d="M39.3,9.5 Q38.3,9.5 38.5,8.3 Q38.7,6.8 40.3,7.0 Q41.2,5.3 43.2,6.2 Q45.5,6.5 45.3,8.3 Q45.5,9.5 44.3,9.5 Z"/><path d="M42,12 L36.6,16" stroke="#444"/><path d="M16.5,22 L26.5,25.6" stroke="#777"/><path d="M14,24 L9,28" stroke="#bbb"/><path d="M15,32.3 L26,32.3" stroke="#ccc" stroke-dasharray="1,0.6"/><path d="M41,32.3 L49,32.3" stroke="#555"/></g><rect x="47.8" y="3.7" width="5.8" height="2.6" fill="#e0e0e0"/><rect x="57.5" y="7.2" width="1.5" height="1.5" fill="none" stroke="#aaa" stroke-width="0.4"/><g fill="#888"><rect x="28.5" y="10.9" width="6" height="0.6"/><rect x="37.5" y="10.9" width="4.5" height="0.6"/><rect x="47.5" y="10.9" width="6" height="0.6"/></g><rect x="24.4" y="16.7" width="6.8" height="3.5" fill="#555"/><rect x="24.4" y="20.8" width="5" height="0.6" fill="#888"/><rect x="24.4" y="22" width="6" height="0.6" fill="#999"/><rect x="35" y="20.9" width="3.5" height="3.2" fill="#666"/><rect x="34" y="24.8" width="5" height="0.6" fill="#999"/><circle cx="15.7" cy="21" r="0.8" fill="#555"/><rect x="14.6" y="22" width="2.2" height="1.8" fill="#555"/><rect x="49.2" y="21" width="3.5" height="2.6" fill="none" stroke="#666" stroke-width="0.5"/><rect x="49" y="24.5" width="4.5" height="2" fill="#bbb"/><rect x="5.3" y="29.3" width="9.2" height="6.1" rx="1" fill="none" stroke="#bbb" stroke-width="0.5"/><rect x="26.3" y="27.8" width="14.4" height="8.8" fill="#fafafa" stroke="#bbb" stroke-width="0.5"/><g stroke="#ddd" stroke-width="0.35"><path d="M26.3,30 H40.7 M26.3,32.2 H40.7 M26.3,34.4 H40.7 M29.2,27.8 V36.6 M32.1,27.8 V36.6 M35,27.8 V36.6 M37.9,27.8 V36.6"/></g><rect x="49.1" y="27.4" width="5.8" height="9.9" fill="#fafafa" stroke="#bbb" stroke-width="0.5"/><g stroke="#ddd" stroke-width="0.35"><path d="M49.1,29.6 H54.9 M49.1,31.8 H54.9 M49.1,34 H54.9 M52,27.4 V37.3"/></g><rect x="28" y="38.2" width="9" height="0.6" fill="#888"/><rect x="5" y="38.2" width="7" height="0.6" fill="#bbb"/></svg></div>
<div class="th" style="left:37.1px;top:163.3px;width:64.8px;height:45.4px;background:linear-gradient(135deg,#ffffff,#f0f0f0);border-radius:2px;box-shadow:0 0 0 0.8px rgba(0,0,0,0.55),0 1px 2px rgba(0,0,0,0.45);"><div style="position:absolute;left:4.4px;top:2.0px;width:57.2px;height:3.4px;background:#e6521c"></div><div style="position:absolute;left:5.3px;top:2.8px;width:5.2px;height:1.6px;background:#f4b098"></div><div style="position:absolute;left:11.5px;top:3.3px;width:30px;height:0.6px;background:#f08a60"></div><div style="position:absolute;left:9px;top:7.9px;width:12.7px;height:1.4px;background:#5a5a5a"></div><div style="position:absolute;left:9px;top:10.3px;width:13px;height:0.5px;background:#c4c4c4"></div><div style="position:absolute;left:9px;top:12.4px;width:8px;height:1.6px;border:1px solid #e4e4e4"></div><div style="position:absolute;left:18.5px;top:12.4px;width:9px;height:1.6px;border:1px solid #e4e4e4"></div><div style="position:absolute;left:28.5px;top:12.4px;width:8px;height:1.6px;border:1px solid #e4e4e4"></div><div style="position:absolute;left:37.5px;top:12.4px;width:8px;height:1.6px;border:1px solid #e4e4e4"></div><div style="position:absolute;left:9px;top:15.3px;width:36px;height:0.5px;background:#d0d0d0"></div><div style="position:absolute;left:9px;top:16.9px;width:6px;height:0.5px;background:#d8d8d8"></div><div style="position:absolute;left:9px;top:20.3px;width:5px;height:0.8px;background:#8a8a8a"></div><div style="position:absolute;left:9px;top:21.8px;width:30px;height:0.5px;background:#dddddd"></div><div style="position:absolute;left:49px;top:21.8px;width:4px;height:0.5px;background:#9cc0e8"></div><svg style="position:absolute;left:9px;top:23.6px" width="45" height="13.2" viewBox="0 0 45 13.2"><rect width="45" height="13.2" fill="#94c6f0"/><path d="M8,0 L24,0 Q26,3 23,6 Q20,8 18,11 Q14,13.2 12,10 Q9,7 10,4 Z" fill="#d6dcc0"/><path d="M12,1 L20,1 Q21,4 18,6 L15,7 Z" fill="#b8d4a8"/><path d="M38,0 L45,0 L45,13.2 L36,13.2 Q34,9 37,6 Q39,3 38,0 Z" fill="#d8dcc4"/><circle cx="22.5" cy="5.8" r="0.7" fill="#222"/></svg><div style="position:absolute;left:0;top:0;bottom:0;width:4.4px;background:linear-gradient(90deg,#3a3a3a 0%,#8a8a8a 30%,#2a2a2a 65%,#000 100%)"></div><svg style="position:absolute;right:2px;top:1.6px;overflow:visible" width="16" height="16" viewBox="0 0 17 17"><defs><filter id="cs" x="-50%" y="-50%" width="200%" height="200%"><feGaussianBlur stdDeviation="1.1"/></filter></defs><path d="M0,0 L0,13 Q0,16.5 3.5,16.5 L17,16.5 Z" fill="#000" opacity="0.32" filter="url(#cs)" transform="translate(-0.5,1)"/><defs><linearGradient id="cfl" x1="0" y1="0" x2="1" y2="1"><stop offset="0" stop-color="#f0f0f0"/><stop offset="0.7" stop-color="#fafafa"/><stop offset="1" stop-color="#ffffff"/></linearGradient></defs><path d="M0,0 L0,13 Q0,16.5 3.5,16.5 L17,16.5 Z" fill="url(#cfl)"/></svg></div>
<div class="th" style="left:157.2px;top:153.7px;width:64.8px;height:64.2px;background:#fff;box-shadow:0 0 0 0.8px rgba(0,0,0,0.55),0 1px 2px rgba(0,0,0,0.45);"><div style="position:absolute;left:3.0px;top:3.0px;right:3.0px;bottom:3.0px;border:1.0px solid #c4c4c4"></div><div style="position:absolute;left:4.1px;top:26.0px;width:3px;height:0.6px;background:#f0a080"></div><div style="position:absolute;left:4.1px;top:27.3px;width:2.8px;height:1.8px;background:#c8e2f6"></div><div style="position:absolute;left:4.1px;top:30.6px;width:2.6px;height:2.2px;border:0.6px solid #999;border-bottom:none"></div><div style="position:absolute;left:8.7px;top:26.0px;width:3px;height:0.6px;background:#f0a080"></div><div style="position:absolute;left:8.7px;top:27.3px;width:2.8px;height:1.8px;background:#c8e2f6"></div><div style="position:absolute;left:8.7px;top:30.6px;width:2.6px;height:2.2px;border:0.6px solid #999;border-bottom:none"></div><div style="position:absolute;left:13.299999999999999px;top:26.0px;width:3px;height:0.6px;background:#f0a080"></div><div style="position:absolute;left:13.299999999999999px;top:27.3px;width:2.8px;height:1.8px;background:#c8e2f6"></div><div style="position:absolute;left:13.299999999999999px;top:30.4px;width:3px;height:0.6px;background:#f0b090"></div><div style="position:absolute;left:13.299999999999999px;top:31.8px;width:3px;height:1.0px;background:#e4e4e4"></div><div style="position:absolute;left:17.9px;top:26.0px;width:3px;height:0.6px;background:#f0a080"></div><div style="position:absolute;left:17.9px;top:27.3px;width:2.8px;height:1.8px;background:#1e1e1e"></div><div style="position:absolute;left:17.9px;top:30.4px;width:3px;height:0.6px;background:#f0b090"></div><div style="position:absolute;left:17.9px;top:31.8px;width:3px;height:1.0px;background:#e4e4e4"></div><div style="position:absolute;left:22.5px;top:26.0px;width:3px;height:0.6px;background:#f0a080"></div><div style="position:absolute;left:22.5px;top:27.3px;width:2.8px;height:1.8px;background:#1e1e1e"></div><div style="position:absolute;left:22.5px;top:30.4px;width:3px;height:0.6px;background:#f0b090"></div><div style="position:absolute;left:22.5px;top:31.8px;width:3px;height:1.0px;background:#e4e4e4"></div><div style="position:absolute;left:27.1px;top:26.0px;width:3px;height:0.6px;background:#f0a080"></div><div style="position:absolute;left:27.1px;top:27.3px;width:2.8px;height:1.8px;background:#1e1e1e"></div><div style="position:absolute;left:27.1px;top:30.4px;width:3px;height:0.6px;background:#f0b090"></div><div style="position:absolute;left:27.1px;top:31.8px;width:3px;height:1.0px;background:#7a8a7a"></div><div style="position:absolute;left:31.699999999999996px;top:26.0px;width:3px;height:0.6px;background:#f0a080"></div><div style="position:absolute;left:31.699999999999996px;top:27.3px;width:2.8px;height:1.8px;background:#1e1e1e"></div><div style="position:absolute;left:31.699999999999996px;top:30.4px;width:3px;height:0.6px;background:#f0b090"></div><div style="position:absolute;left:31.699999999999996px;top:31.8px;width:3px;height:1.0px;background:#e4e4e4"></div><div style="position:absolute;left:36.3px;top:26.0px;width:3px;height:0.6px;background:#f0a080"></div><div style="position:absolute;left:36.3px;top:27.3px;width:2.8px;height:1.8px;background:#1e1e1e"></div><div style="position:absolute;left:36.3px;top:30.4px;width:3px;height:0.6px;background:#f0b090"></div><div style="position:absolute;left:36.3px;top:31.8px;width:3px;height:1.0px;background:#e4e4e4"></div><div style="position:absolute;left:40.9px;top:26.0px;width:3px;height:0.6px;background:#f0a080"></div><div style="position:absolute;left:40.9px;top:27.3px;width:2.8px;height:1.8px;background:#c8e2f6"></div><div style="position:absolute;left:40.9px;top:30.4px;width:3px;height:0.6px;background:#f0b090"></div><div style="position:absolute;left:40.9px;top:31.8px;width:3px;height:1.0px;background:#e4e4e4"></div><div style="position:absolute;left:48.2px;top:31.2px;width:3px;height:2.2px;background:#111"></div><div style="position:absolute;left:52.6px;top:35.6px;width:3px;height:2px;background:#111"></div><div style="position:absolute;left:20px;top:34.4px;width:3.5px;height:0.7px;background:#f0a080"></div><div style="position:absolute;left:25.6px;top:34.4px;width:3.5px;height:0.7px;background:#f0a080"></div><div style="position:absolute;left:20px;top:36px;width:3.5px;height:0.6px;background:#ddd"></div><div style="position:absolute;left:25.6px;top:36px;width:3.5px;height:0.6px;background:#ddd"></div><div style="position:absolute;left:58px;top:35.5px;width:2.5px;height:0.8px;background:#f0a080"></div><div style="position:absolute;left:48px;top:30.4px;width:3px;height:0.6px;background:#f0a080"></div><div style="position:absolute;left:52.5px;top:30.4px;width:3px;height:0.6px;background:#c0c8e0"></div></div>
<div class="th" style="left:284.0px;top:153.4px;width:50.0px;height:64.6px;background:#fff;box-shadow:0 0 0 0.8px rgba(0,0,0,0.55),0 1px 2px rgba(0,0,0,0.45);"><div style="position:absolute;left:3px;top:3px;right:3px;bottom:3px;background:radial-gradient(ellipse at 45% 45%,#e2dacd 0%,#d4ccbd 55%,#b8ae9c 100%);overflow:hidden"><div style="position:absolute;left:0px;top:0px;width:44px;height:2.4px;background:linear-gradient(90deg,#3a3028,#5a4a40,#3a3028)"></div><div style="position:absolute;left:13px;top:3.2px;font:bold 4.2px/5px Liberation Serif;color:#a84a40;letter-spacing:0.1px">Samples</div><div style="position:absolute;left:8px;top:9.0px;width:8px;height:0.6px;background:#6a6a6a"></div><div style="position:absolute;left:8px;top:10.8px;width:20px;height:0.5px;background:#8a8a8a"></div><div style="position:absolute;left:8px;top:12.5px;width:14px;height:0.5px;background:#9a9a9a"></div><div style="position:absolute;left:10px;top:14.5px;width:12px;height:0.9px;background:#6aa8d8"></div><div style="position:absolute;left:10px;top:16.6px;width:13px;height:0.9px;background:#6aa8d8"></div><div style="position:absolute;left:8px;top:19.5px;width:6px;height:0.6px;background:#6a6a6a"></div><div style="position:absolute;left:10px;top:21.3px;width:18px;height:0.45px;background:#9a9a9a"></div><div style="position:absolute;left:10px;top:23.0px;width:18px;height:0.45px;background:#9a9a9a"></div><div style="position:absolute;left:10px;top:24.7px;width:18px;height:0.45px;background:#9a9a9a"></div><div style="position:absolute;left:10px;top:26.4px;width:18px;height:0.45px;background:#9a9a9a"></div><div style="position:absolute;left:10px;top:28.1px;width:18px;height:0.45px;background:#9a9a9a"></div><div style="position:absolute;left:9px;top:30.5px;width:3px;height:0.6px;background:#777"></div><div style="position:absolute;left:10.5px;top:32.5px;width:9px;height:0.9px;background:#6aa8d8"></div><div style="position:absolute;left:21px;top:32.5px;width:8px;height:0.5px;background:#999"></div><div style="position:absolute;left:10.5px;top:35px;width:12px;height:0.9px;background:#6aa8d8"></div><div style="position:absolute;left:24px;top:35px;width:7px;height:0.5px;background:#999"></div><div style="position:absolute;left:10.5px;top:37.5px;width:12px;height:0.9px;background:#6aa8d8"></div><div style="position:absolute;left:24px;top:37.5px;width:7px;height:0.5px;background:#999"></div><div style="position:absolute;left:9px;top:40.5px;width:3px;height:0.6px;background:#777"></div><div style="position:absolute;left:13px;top:40.8px;width:18px;height:0.5px;background:#aaa"></div><div style="position:absolute;left:11px;top:43.5px;width:14px;height:2.6px;background:#5eaee0"></div><div style="position:absolute;left:11px;top:47.5px;width:17px;height:1.0px;background:#6aa8d8"></div><div style="position:absolute;left:14px;top:52.5px;width:10px;height:1.2px;background:#6aa8d8"></div><div style="position:absolute;left:0px;top:25px;width:4.6px;height:1.6px;background:#7aa060"></div><div style="position:absolute;left:0px;top:28px;width:4.6px;height:1.4px;background:#86a870"></div><div style="position:absolute;left:0px;top:37.5px;width:4.6px;height:2.2px;background:#7aa060"></div><div style="position:absolute;left:0px;top:45px;width:4.6px;height:1.4px;background:#86a870"></div><div style="position:absolute;left:0px;top:49.5px;width:5px;height:2.6px;background:#6a9a50"></div><div style="position:absolute;left:36px;top:8px;width:8px;height:3px;background:#c8c2b6"></div><div style="position:absolute;left:36px;top:14.5px;width:8px;height:1px;background:#a8b898"></div><div style="position:absolute;left:36px;top:20px;width:8px;height:1.2px;background:#8ab070"></div><div style="position:absolute;left:36px;top:24px;width:8px;height:3px;background:#bcb6aa"></div><div style="position:absolute;left:36px;top:32px;width:8px;height:1px;background:#a8b898"></div><div style="position:absolute;left:36px;top:35px;width:8px;height:1.2px;background:#8ab070"></div><div style="position:absolute;left:36px;top:40px;width:8px;height:3px;background:#c0baae"></div><div style="position:absolute;left:36px;top:46px;width:8px;height:1.2px;background:#8ab070"></div></div></div>
<div class="th" style="left:404.0px;top:153.4px;width:49.7px;height:64.6px;background:#fff;box-shadow:0 0 0 0.8px rgba(0,0,0,0.55),0 1px 2px rgba(0,0,0,0.45);"><div style="position:absolute;left:2.8px;top:3.3px;right:2.8px;bottom:3px;overflow:hidden"><svg style="position:absolute;left:0;top:0" width="44" height="58" viewBox="0 0 44 58"><defs><radialGradient id="p17" cx="0.45" cy="0.4" r="0.7"><stop offset="0" stop-color="#e4ded4"/><stop offset="0.7" stop-color="#dcd5ca"/><stop offset="1" stop-color="#c8bfb2"/></radialGradient></defs><rect width="44" height="58" fill="url(#p17)"/><g stroke="#b4aea6" stroke-width="0.4"><path d="M8,8.0 H24"/><path d="M8,9.5 H31"/><path d="M8,11.0 H28"/><path d="M8,12.5 H25"/><path d="M8,14.0 H32"/><path d="M8,15.5 H29"/><path d="M8,17.0 H26"/><path d="M8,18.5 H33"/><path d="M8,20.0 H30"/><path d="M8,21.5 H27"/><path d="M8,23.0 H24"/><path d="M8,24.5 H31"/><path d="M8,26.0 H28"/></g><path d="M18,3.1 H25" stroke="#888" stroke-width="0.6"/><path d="M20,34.8 H23" stroke="#999" stroke-width="0.6"/><circle cx="1.3" cy="2.7" r="1.4" fill="#2a7a4a"/><circle cx="5.3" cy="2.7" r="1.4" fill="#d07028"/><circle cx="9.4" cy="2.7" r="1.4" fill="#1e1e5e"/><circle cx="1.3" cy="6.9" r="1.4" fill="#c02222"/><circle cx="1.8" cy="11.3" r="1.4" fill="#1e1e5e"/><circle cx="33.8" cy="2.7" r="1.4" fill="#1e1e5e"/><circle cx="37.8" cy="3.0" r="1.4" fill="#c02222"/><circle cx="41.5" cy="3.2" r="1.4" fill="#1e1e5e"/><circle cx="41.5" cy="7.3" r="1.4" fill="#d07028"/><circle cx="41.5" cy="11.6" r="1.4" fill="#2a7a4a"/><circle cx="2.2" cy="26.6" r="1.4" fill="#d07028"/><circle cx="2.2" cy="30.8" r="1.4" fill="#c02222"/><circle cx="1.9" cy="34.6" r="1.4" fill="#2a7a4a"/><circle cx="6.0" cy="34.6" r="1.4" fill="#1e1e5e"/><circle cx="9.9" cy="34.6" r="1.4" fill="#1e1e5e"/><circle cx="41.2" cy="27.1" r="1.4" fill="#1e1e5e"/><circle cx="41.0" cy="31.3" r="1.4" fill="#1e1e5e"/><circle cx="32.4" cy="34.6" r="1.4" fill="#d07028"/><circle cx="36.6" cy="34.6" r="1.4" fill="#c02222"/><circle cx="40.7" cy="34.9" r="1.4" fill="#2a7a4a"/><path d="M17.2,14.4 Q19.6,13.2 21.4,11.6 L21.6,22.4 M17.4,23.0 Q21.2,22.2 25.4,22.6" fill="none" stroke="#8a2a5a" stroke-width="1.6" stroke-linecap="round"/><path d="M36.8,41.5 Q38.5,39.4 42,40 L44,41 L44,55.3 Q41.5,52 39.5,46 Z" fill="#d8b49c"/></svg></div></div>
<div class="th" style="left:516.1px;top:158.2px;width:65.0px;height:55.4px;box-shadow:0 0 0 0.8px rgba(0,0,0,0.55),0 1px 2px rgba(0,0,0,0.45);"><div style="position:absolute;left:0px;top:0px;width:65px;height:6.9px;background:linear-gradient(160deg,#3a3a3a 0%,#262626 50%,#111 80%,#000 100%)"></div><div style="position:absolute;left:0px;top:6.9px;width:65px;height:41.4px;background:#f7f7f7"></div><div style="position:absolute;left:0px;top:6.9px;width:65px;height:2.6px;background:#fdfdfd"></div><div style="position:absolute;left:2px;top:7.8px;width:6.5px;height:1.2px;background:#7cc87c"></div><div style="position:absolute;left:12px;top:8px;width:18px;height:0.6px;background:#e0e0e0"></div><div style="position:absolute;left:43.8px;top:7.6px;width:2.8px;height:1.6px;background:#3cb84c"></div><div style="position:absolute;left:56.3px;top:7.6px;width:4.4px;height:1.8px;background:#3cc03c"></div><div style="position:absolute;left:1.7px;top:10.5px;width:1.8px;height:1.8px;background:#5cc05c;border-radius:50%"></div><div style="position:absolute;left:24px;top:11.1px;width:20px;height:0.5px;background:#d8d8d8"></div><div style="position:absolute;left:5.3px;top:13.5px;width:3.7px;height:4px;background:#c8a070"></div><div style="position:absolute;left:5.8px;top:19.8px;width:3px;height:3.5px;background:#9a5ab8"></div><div style="position:absolute;left:5.8px;top:25.8px;width:3px;height:3.8px;background:#e87830"></div><div style="position:absolute;left:12px;top:14.3px;width:17.5px;height:0.6px;background:#c8c8c8"></div><div style="position:absolute;left:12px;top:20.3px;width:17.5px;height:0.6px;background:#c8c8c8"></div><div style="position:absolute;left:12px;top:26.3px;width:15.5px;height:0.6px;background:#c8c8c8"></div><div style="position:absolute;left:41px;top:14.3px;width:2.5px;height:0.6px;background:#aaa"></div><div style="position:absolute;left:41px;top:20.3px;width:2.5px;height:0.6px;background:#aaa"></div><div style="position:absolute;left:41px;top:26.3px;width:2.5px;height:0.6px;background:#aaa"></div><div style="position:absolute;left:47.3px;top:11px;width:0.5px;height:22px;background:#e4e4e4"></div><div style="position:absolute;left:49px;top:13.0px;width:10px;height:0.5px;background:#d0d0d0"></div><div style="position:absolute;left:49px;top:15.6px;width:10px;height:0.5px;background:#d0d0d0"></div><div style="position:absolute;left:49px;top:18.2px;width:10px;height:0.5px;background:#d0d0d0"></div><div style="position:absolute;left:49px;top:20.8px;width:10px;height:0.5px;background:#d0d0d0"></div><div style="position:absolute;left:49px;top:23.4px;width:10px;height:0.5px;background:#d0d0d0"></div><div style="position:absolute;left:49px;top:26.0px;width:10px;height:0.5px;background:#d0d0d0"></div><div style="position:absolute;left:49px;top:28.6px;width:10px;height:0.5px;background:#d0d0d0"></div><div style="position:absolute;left:49px;top:31.2px;width:10px;height:0.5px;background:#d0d0d0"></div><div style="position:absolute;left:0px;top:35.5px;width:65px;height:12.8px;background:#fbfbfb;border-top:1px solid #e0e0e0"></div><div style="position:absolute;left:0px;top:36.8px;width:65px;height:0.6px;background:#e6e6e6"></div><div style="position:absolute;left:1px;top:39.0px;width:63px;height:0.5px;background:#ececec"></div><div style="position:absolute;left:1px;top:40.6px;width:63px;height:0.5px;background:#ececec"></div><div style="position:absolute;left:1px;top:42.2px;width:63px;height:0.5px;background:#ececec"></div><div style="position:absolute;left:1px;top:43.8px;width:63px;height:0.5px;background:#ececec"></div><div style="position:absolute;left:1px;top:45.4px;width:63px;height:0.5px;background:#ececec"></div><div style="position:absolute;left:12px;top:36px;width:0.5px;height:12px;background:#e4e4e4"></div><div style="position:absolute;left:19px;top:36px;width:0.5px;height:12px;background:#e4e4e4"></div><div style="position:absolute;left:26px;top:36px;width:0.5px;height:12px;background:#e4e4e4"></div><div style="position:absolute;left:33px;top:36px;width:0.5px;height:12px;background:#e4e4e4"></div><div style="position:absolute;left:41px;top:36px;width:0.5px;height:12px;background:#e4e4e4"></div><div style="position:absolute;left:49px;top:36px;width:0.5px;height:12px;background:#e4e4e4"></div><div style="position:absolute;left:55.6px;top:36px;width:0.6px;height:12.3px;background:#8ab4ec"></div><div style="position:absolute;left:0px;top:48.3px;width:65px;height:7.1px;background:#000"></div></div>
<div class="th" style="left:643.0px;top:153.8px;width:50.0px;height:63.9px;background:#fdfdfd;border-radius:2px;box-shadow:0 0 0 0.8px rgba(0,0,0,0.55),0 1px 2px rgba(0,0,0,0.45);"><div style="position:absolute;left:8.2px;top:5.8px;width:24px;height:1.2px;background:#6a6a6a"></div><div style="position:absolute;left:13px;top:7.8px;width:19px;height:1.4px;background:#555"></div><div style="position:absolute;left:17px;top:10.2px;width:12px;height:0.6px;background:#aaa"></div><div style="position:absolute;left:5.2px;top:12.5px;width:19.5px;height:46.0px;background:repeating-linear-gradient(180deg,#b4b4b4 0px,#c8c8c8 0.7px,#f4f4f4 1.1px,#fdfdfd 1.5px)"></div><div style="position:absolute;left:26.3px;top:12.5px;width:19.5px;height:46.0px;background:repeating-linear-gradient(180deg,#b4b4b4 0px,#c8c8c8 0.7px,#f4f4f4 1.1px,#fdfdfd 1.5px)"></div><div style="position:absolute;left:5.2px;top:28.8px;width:19px;height:1.6px;background:#777"></div><div style="position:absolute;left:5.2px;top:37.4px;width:11px;height:0.6px;background:#9ab8e0"></div><div style="position:absolute;left:5.2px;top:47.5px;width:10px;height:0.6px;background:#9ab8e0"></div><div style="position:absolute;left:47.3px;top:6px;width:0.5px;height:53px;background:#f4c4c4"></div><div style="position:absolute;left:0;top:0;bottom:0;width:4.8px;background:linear-gradient(90deg,#3a3a3a 0%,#8a8a8a 30%,#2a2a2a 65%,#000 100%)"></div><svg style="position:absolute;right:2.2px;top:1.6px;overflow:visible" width="15" height="15" viewBox="0 0 17 17"><defs><filter id="cs" x="-50%" y="-50%" width="200%" height="200%"><feGaussianBlur stdDeviation="1.1"/></filter></defs><path d="M0,0 L0,13 Q0,16.5 3.5,16.5 L17,16.5 Z" fill="#000" opacity="0.32" filter="url(#cs)" transform="translate(-0.5,1)"/><defs><linearGradient id="cfl" x1="0" y1="0" x2="1" y2="1"><stop offset="0" stop-color="#f0f0f0"/><stop offset="0.7" stop-color="#fafafa"/><stop offset="1" stop-color="#ffffff"/></linearGradient></defs><path d="M0,0 L0,13 Q0,16.5 3.5,16.5 L17,16.5 Z" fill="url(#cfl)"/></svg></div>
<div class="th" style="left:756.2px;top:161.8px;width:64.3px;height:48.0px;background:linear-gradient(to bottom left,#dadada 0%,#ededed 45%,#fbfbfb 100%);border-radius:2.5px;box-shadow:0 0 0 0.8px rgba(0,0,0,0.55),0 1px 2px rgba(0,0,0,0.45);"><div style="position:absolute;left:0;top:11.2px;width:64px;text-align:center;font:bold 3.2px/4.1px Liberation Sans;color:#222;letter-spacing:0">Towards a<br>Less Centralized Web<br>with Wildcard</div><div style="position:absolute;left:0;top:28px;width:64px;text-align:center;font:2.6px/3px Liberation Sans;color:#333">Geoffrey Litt<br>3/5/20</div></div>
<div class="th" style="left:875.2px;top:158.2px;width:65.0px;height:55.4px;box-shadow:0 0 0 0.8px rgba(0,0,0,0.55),0 1px 2px rgba(0,0,0,0.45);"><div style="position:absolute;left:0px;top:0px;width:65px;height:10.6px;background:linear-gradient(165deg,#383838 0%,#2c2c2c 45%,#141414 70%,#000 100%)"></div><div style="position:absolute;left:4.5px;top:7.8px;width:50px;height:1.6px;background:#4a4a4a"></div><div style="position:absolute;left:1.2px;top:8.0px;width:1.2px;height:1.2px;background:#b05040;border-radius:50%"></div><div style="position:absolute;left:0px;top:10.6px;width:65px;height:37.7px;background:#f4f4f4"></div><div style="position:absolute;left:0px;top:10.6px;width:65px;height:1.6px;background:#fafafa"></div><div style="position:absolute;left:0.6px;top:12.8px;width:10px;height:2.0px;background:#dfe8df"></div><div style="position:absolute;left:8.5px;top:12.6px;width:2.2px;height:2.2px;background:#4cc86c;border-radius:50%"></div><div style="position:absolute;left:22.4px;top:15.8px;width:7.5px;height:0.7px;background:#999"></div><div style="position:absolute;left:22.4px;top:17px;width:42px;height:0.5px;background:#dddddd"></div><div style="position:absolute;left:8.5px;top:18.0px;width:8.5px;height:0.7px;background:#d8dcaa"></div><div style="position:absolute;left:8.5px;top:19.9px;width:8.5px;height:0.7px;background:#d8dcaa"></div><div style="position:absolute;left:8.5px;top:21.8px;width:8.5px;height:0.7px;background:#d8dcaa"></div><div style="position:absolute;left:8.5px;top:23.7px;width:8.5px;height:0.7px;background:#d8dcaa"></div><div style="position:absolute;left:8.5px;top:25.6px;width:8.5px;height:0.7px;background:#d8dcaa"></div><div style="position:absolute;left:8.5px;top:27.5px;width:8.5px;height:0.7px;background:#d8dcaa"></div><div style="position:absolute;left:8.5px;top:29.4px;width:8.5px;height:0.7px;background:#d8dcaa"></div><div style="position:absolute;left:8.5px;top:31.3px;width:8.5px;height:0.7px;background:#d8dcaa"></div><div style="position:absolute;left:8.5px;top:33.2px;width:8.5px;height:0.7px;background:#d8dcaa"></div><div style="position:absolute;left:8.5px;top:21.5px;width:3.5px;height:0.7px;background:#9ab0d8"></div><div style="position:absolute;left:22.4px;top:19.9px;width:17.3px;height:2.0px;background:#aaca46"></div><div style="position:absolute;left:22.4px;top:22.8px;width:34px;height:11.2px;border:1px solid #cfe6d8;background:#fdfdfd"></div><div style="position:absolute;left:23.4px;top:23.6px;width:32px;height:1.5px;background:#8a8f8a"></div><div style="position:absolute;left:23.4px;top:25.8px;width:3px;height:0.7px;background:#333"></div><div style="position:absolute;left:23.4px;top:27.2px;width:11px;height:0.8px;background:#444"></div><div style="position:absolute;left:23.4px;top:29.5px;width:31px;height:0.5px;background:#c8c8c8"></div><div style="position:absolute;left:23.4px;top:30.6px;width:31px;height:0.5px;background:#c8c8c8"></div><div style="position:absolute;left:23.4px;top:31.7px;width:31px;height:0.5px;background:#c8c8c8"></div><div style="position:absolute;left:23.4px;top:32.8px;width:31px;height:0.5px;background:#c8c8c8"></div><div style="position:absolute;left:0px;top:36px;width:65px;height:12.3px;background:#f8f8f8;border-top:1px solid #d8d8d8"></div><div style="position:absolute;left:6px;top:36.6px;width:31px;height:1.6px;background:#dde8f4"></div><div style="position:absolute;left:1.5px;top:39.5px;width:35px;height:0.5px;background:#d6d6d6"></div><div style="position:absolute;left:1.5px;top:41.1px;width:35px;height:0.5px;background:#d6d6d6"></div><div style="position:absolute;left:1.5px;top:42.7px;width:35px;height:0.5px;background:#d6d6d6"></div><div style="position:absolute;left:1.5px;top:44.3px;width:35px;height:0.5px;background:#d6d6d6"></div><div style="position:absolute;left:1.5px;top:45.9px;width:35px;height:0.5px;background:#d6d6d6"></div><div style="position:absolute;left:40px;top:37.5px;width:0.5px;height:10px;background:#e4e4e4"></div><div style="position:absolute;left:42px;top:39.0px;width:10px;height:0.5px;background:#dddddd"></div><div style="position:absolute;left:42px;top:40.6px;width:10px;height:0.5px;background:#dddddd"></div><div style="position:absolute;left:0px;top:48.3px;width:65px;height:7.1px;background:#000"></div></div>
<div class="th" style="left:995.0px;top:158.3px;width:64.8px;height:55.4px;box-shadow:0 0 0 0.8px rgba(0,0,0,0.55),0 1px 2px rgba(0,0,0,0.45);"><div style="position:absolute;left:0px;top:0px;width:64.8px;height:10.6px;background:linear-gradient(165deg,#383838 0%,#2c2c2c 45%,#141414 70%,#000 100%)"></div><div style="position:absolute;left:4.5px;top:7.8px;width:50px;height:1.6px;background:#4a4a4a"></div><div style="position:absolute;left:1.2px;top:8.0px;width:1.2px;height:1.2px;background:#b05040;border-radius:50%"></div><div style="position:absolute;left:0px;top:10.6px;width:64.8px;height:37.7px;background:#f4f4f4"></div><div style="position:absolute;left:0px;top:10.6px;width:64.8px;height:1.6px;background:#fafafa"></div><div style="position:absolute;left:0.6px;top:12.8px;width:10px;height:2.0px;background:#dfe8df"></div><div style="position:absolute;left:8.5px;top:12.6px;width:2.2px;height:2.2px;background:#4cc86c;border-radius:50%"></div><div style="position:absolute;left:22.4px;top:15.8px;width:7.5px;height:0.7px;background:#999"></div><div style="position:absolute;left:22.4px;top:17px;width:41.8px;height:0.5px;background:#dddddd"></div><div style="position:absolute;left:8.5px;top:18.0px;width:8.5px;height:0.7px;background:#d8dcaa"></div><div style="position:absolute;left:8.5px;top:19.9px;width:8.5px;height:0.7px;background:#d8dcaa"></div><div style="position:absolute;left:8.5px;top:21.8px;width:8.5px;height:0.7px;background:#d8dcaa"></div><div style="position:absolute;left:8.5px;top:23.7px;width:8.5px;height:0.7px;background:#d8dcaa"></div><div style="position:absolute;left:8.5px;top:25.6px;width:8.5px;height:0.7px;background:#d8dcaa"></div><div style="position:absolute;left:8.5px;top:27.5px;width:8.5px;height:0.7px;background:#d8dcaa"></div><div style="position:absolute;left:8.5px;top:29.4px;width:8.5px;height:0.7px;background:#d8dcaa"></div><div style="position:absolute;left:8.5px;top:31.3px;width:8.5px;height:0.7px;background:#d8dcaa"></div><div style="position:absolute;left:8.5px;top:33.2px;width:8.5px;height:0.7px;background:#d8dcaa"></div><div style="position:absolute;left:8.5px;top:21.5px;width:3.5px;height:0.7px;background:#9ab0d8"></div><div style="position:absolute;left:22.4px;top:19.9px;width:17.3px;height:2.0px;background:#aaca46"></div><div style="position:absolute;left:22.4px;top:22.8px;width:34px;height:11.2px;border:1px solid #cfe6d8;background:#fdfdfd"></div><div style="position:absolute;left:23.4px;top:23.6px;width:32px;height:1.5px;background:#8a8f8a"></div><div style="position:absolute;left:23.4px;top:25.8px;width:3px;height:0.7px;background:#333"></div><div style="position:absolute;left:23.4px;top:27.2px;width:11px;height:0.8px;background:#444"></div><div style="position:absolute;left:23.4px;top:29.5px;width:31px;height:0.5px;background:#c8c8c8"></div><div style="position:absolute;left:23.4px;top:30.6px;width:31px;height:0.5px;background:#c8c8c8"></div><div style="position:absolute;left:23.4px;top:31.7px;width:31px;height:0.5px;background:#c8c8c8"></div><div style="position:absolute;left:23.4px;top:32.8px;width:31px;height:0.5px;background:#c8c8c8"></div><div style="position:absolute;left:0px;top:36px;width:64.8px;height:12.3px;background:#f8f8f8;border-top:1px solid #d8d8d8"></div><div style="position:absolute;left:6px;top:36.6px;width:31px;height:1.6px;background:#dde8f4"></div><div style="position:absolute;left:1.5px;top:39.5px;width:35px;height:0.5px;background:#d6d6d6"></div><div style="position:absolute;left:1.5px;top:41.1px;width:35px;height:0.5px;background:#d6d6d6"></div><div style="position:absolute;left:1.5px;top:42.7px;width:35px;height:0.5px;background:#d6d6d6"></div><div style="position:absolute;left:1.5px;top:44.3px;width:35px;height:0.5px;background:#d6d6d6"></div><div style="position:absolute;left:1.5px;top:45.9px;width:35px;height:0.5px;background:#d6d6d6"></div><div style="position:absolute;left:40px;top:37.5px;width:0.5px;height:10px;background:#e4e4e4"></div><div style="position:absolute;left:42px;top:39.0px;width:10px;height:0.5px;background:#dddddd"></div><div style="position:absolute;left:42px;top:40.6px;width:10px;height:0.5px;background:#dddddd"></div><div style="position:absolute;left:0px;top:48.3px;width:64.8px;height:7.1px;background:#000"></div></div>
<div class="ib" style="left:37.5px;top:291.3px"><svg width="64" height="64" viewBox="0 0 64 64">
<defs>
<linearGradient id="fb" x1="0" y1="0" x2="0" y2="1"><stop offset="0" stop-color="#42b2ea"/><stop offset="0.75" stop-color="#33a6e4"/><stop offset="1" stop-color="#2aa0e0"/></linearGradient>
<linearGradient id="fband" x1="0" y1="0" x2="0" y2="1"><stop offset="0" stop-color="#1f9ade"/><stop offset="1" stop-color="#0788d0"/></linearGradient>
<linearGradient id="ff" x1="0" y1="0" x2="0" y2="1"><stop offset="0" stop-color="#66cffc"/><stop offset="0.86" stop-color="#5cc8f9"/><stop offset="0.9" stop-color="#4cbdf3"/><stop offset="1" stop-color="#3fb5ef"/></linearGradient>
</defs>
<path d="M0,11 Q0,6.6 4.2,6.6 L18.5,6.6 Q20.8,6.6 22.6,7.9 L26.2,10.4 Q27.9,11.6 30.2,11.6 L60,11.6 Q64.3,11.6 64.3,16 L64.3,56.2 Q64.3,60.2 60.3,60.2 L4,60.2 Q0,60.2 0,56.2 Z" fill="url(#fb)" stroke="#140e0c" stroke-opacity="0.6" stroke-width="0.9"/>
<rect x="0" y="13.2" width="64.3" height="2.8" fill="url(#fband)"/>
<path d="M0,17.6 Q0,15.6 2,15.6 L62.3,15.6 Q64.3,15.6 64.3,17.6 L64.3,56.2 Q64.3,60.2 60.3,60.2 L4,60.2 Q0,60.2 0,56.2 Z" fill="url(#ff)"/>
<rect x="1" y="15.7" width="62.3" height="0.8" fill="#80d8fd" opacity="0.5"/>
</svg></div>
<div class="ib" style="left:157.3px;top:291.3px"><svg width="64" height="64" viewBox="0 0 64 64"><defs><linearGradient id="pg" x1="0" y1="0" x2="1" y2="1"><stop offset="0" stop-color="#f4f4f4"/><stop offset="1" stop-color="#e6e6e6"/></linearGradient>
<linearGradient id="fold" x1="0" y1="0" x2="1" y2="1"><stop offset="0" stop-color="#f2f2f2"/><stop offset="0.6" stop-color="#fbfbfb"/><stop offset="1" stop-color="#ffffff"/></linearGradient>
<filter id="fs" x="-50%" y="-50%" width="200%" height="200%"><feGaussianBlur stdDeviation="1.1"/></filter></defs>
<path d="M11.0,0.6 L36.9,0.6 L55.9,19.6 L55.9,61.3 Q55.9,63.8 53.4,63.8 L11.0,63.8 Q8.5,63.8 8.5,61.3 L8.5,3.1 Q8.5,0.6 11.0,0.6 Z" fill="url(#pg)" stroke="#111" stroke-opacity="0.35" stroke-width="0.8"/>
<rect x="27.5" y="0.6" width="8.6" height="35.6" rx="4" fill="#4a4f53"/>
<rect x="28.6" y="0.6" width="6.4" height="34" rx="3" fill="#6c7276"/>
<rect x="29.2" y="12.6" width="5.2" height="0.7" fill="#9aa0a4"/><rect x="29.2" y="14.1" width="5.2" height="0.7" fill="#9aa0a4"/><rect x="29.2" y="15.6" width="5.2" height="0.7" fill="#9aa0a4"/><rect x="29.2" y="17.1" width="5.2" height="0.7" fill="#9aa0a4"/><rect x="29.2" y="18.6" width="5.2" height="0.7" fill="#9aa0a4"/><rect x="29.2" y="20.1" width="5.2" height="0.7" fill="#9aa0a4"/><rect x="29.2" y="21.6" width="5.2" height="0.7" fill="#9aa0a4"/><rect x="29.2" y="23.1" width="5.2" height="0.7" fill="#9aa0a4"/><rect x="29.2" y="24.6" width="5.2" height="0.7" fill="#9aa0a4"/><rect x="29.2" y="26.1" width="5.2" height="0.7" fill="#9aa0a4"/><rect x="29.2" y="27.6" width="5.2" height="0.7" fill="#9aa0a4"/><rect x="29.2" y="29.1" width="5.2" height="0.7" fill="#9aa0a4"/><rect x="29.2" y="30.6" width="5.2" height="0.7" fill="#9aa0a4"/><rect x="29.2" y="32.1" width="5.2" height="0.7" fill="#9aa0a4"/><rect x="29.2" y="33.6" width="5.2" height="0.7" fill="#9aa0a4"/>
<rect x="30.8" y="0.6" width="2" height="34" fill="#50565a" opacity="0.6"/>
<ellipse cx="31.8" cy="7.1" rx="3" ry="3.6" fill="#8f9aa2"/>
<ellipse cx="31.8" cy="6.6" rx="1.8" ry="2.2" fill="#b8c8d2"/>
<ellipse cx="31.8" cy="17.6" rx="2" ry="2.3" fill="#8a969e"/>
<path d="M36.9,0.6 L36.9,16.1 Q36.9,19.6 40.4,19.6 L55.9,19.6 Z" fill="#000" opacity="0.30" filter="url(#fs)" transform="translate(-0.6,1.4)"/><path d="M36.9,0.6 L36.9,16.1 Q36.9,19.6 40.4,19.6 L55.9,19.6 Z" fill="url(#fold)"/><path d="M37.199999999999996,0.8999999999999999 L55.6,19.3" stroke="#fff" stroke-width="0.8"/>
<text x="31.900000000000002" y="58.6" text-anchor="middle" font-family="Liberation Sans" font-size="9.6" fill="#777">ZIP</text>
</svg></div>
<div class="ib" style="left:277.1px;top:291.3px"><svg width="64" height="64" viewBox="0 0 64 64">
<defs>
<linearGradient id="fb" x1="0" y1="0" x2="0" y2="1"><stop offset="0" stop-color="#42b2ea"/><stop offset="0.75" stop-color="#33a6e4"/><stop offset="1" stop-color="#2aa0e0"/></linearGradient>
<linearGradient id="fband" x1="0" y1="0" x2="0" y2="1"><stop offset="0" stop-color="#1f9ade"/><stop offset="1" stop-color="#0788d0"/></linearGradient>
<linearGradient id="ff" x1="0" y1="0" x2="0" y2="1"><stop offset="0" stop-color="#66cffc"/><stop offset="0.86" stop-color="#5cc8f9"/><stop offset="0.9" stop-color="#4cbdf3"/><stop offset="1" stop-color="#3fb5ef"/></linearGradient>
</defs>
<path d="M0,11 Q0,6.6 4.2,6.6 L18.5,6.6 Q20.8,6.6 22.6,7.9 L26.2,10.4 Q27.9,11.6 30.2,11.6 L60,11.6 Q64.3,11.6 64.3,16 L64.3,56.2 Q64.3,60.2 60.3,60.2 L4,60.2 Q0,60.2 0,56.2 Z" fill="url(#fb)" stroke="#140e0c" stroke-opacity="0.6" stroke-width="0.9"/>
<rect x="0" y="13.2" width="64.3" height="2.8" fill="url(#fband)"/>
<path d="M0,17.6 Q0,15.6 2,15.6 L62.3,15.6 Q64.3,15.6 64.3,17.6 L64.3,56.2 Q64.3,60.2 60.3,60.2 L4,60.2 Q0,60.2 0,56.2 Z" fill="url(#ff)"/>
<rect x="1" y="15.7" width="62.3" height="0.8" fill="#80d8fd" opacity="0.5"/>
</svg></div>
<div class="ib" style="left:396.9px;top:291.3px"><svg width="64" height="64" viewBox="0 0 64 64"><defs><linearGradient id="pg" x1="0" y1="0" x2="1" y2="1"><stop offset="0" stop-color="#f4f4f4"/><stop offset="1" stop-color="#e6e6e6"/></linearGradient>
<linearGradient id="fold" x1="0" y1="0" x2="1" y2="1"><stop offset="0" stop-color="#f2f2f2"/><stop offset="0.6" stop-color="#fbfbfb"/><stop offset="1" stop-color="#ffffff"/></linearGradient>
<filter id="fs" x="-50%" y="-50%" width="200%" height="200%"><feGaussianBlur stdDeviation="1.1"/></filter></defs>
<path d="M11.0,0.6 L36.9,0.6 L55.9,19.6 L55.9,61.3 Q55.9,63.8 53.4,63.8 L11.0,63.8 Q8.5,63.8 8.5,61.3 L8.5,3.1 Q8.5,0.6 11.0,0.6 Z" fill="url(#pg)" stroke="#111" stroke-opacity="0.35" stroke-width="0.8"/>
<rect x="27.5" y="0.6" width="8.6" height="35.6" rx="4" fill="#4a4f53"/>
<rect x="28.6" y="0.6" width="6.4" height="34" rx="3" fill="#6c7276"/>
<rect x="29.2" y="12.6" width="5.2" height="0.7" fill="#9aa0a4"/><rect x="29.2" y="14.1" width="5.2" height="0.7" fill="#9aa0a4"/><rect x="29.2" y="15.6" width="5.2" height="0.7" fill="#9aa0a4"/><rect x="29.2" y="17.1" width="5.2" height="0.7" fill="#9aa0a4"/><rect x="29.2" y="18.6" width="5.2" height="0.7" fill="#9aa0a4"/><rect x="29.2" y="20.1" width="5.2" height="0.7" fill="#9aa0a4"/><rect x="29.2" y="21.6" width="5.2" height="0.7" fill="#9aa0a4"/><rect x="29.2" y="23.1" width="5.2" height="0.7" fill="#9aa0a4"/><rect x="29.2" y="24.6" width="5.2" height="0.7" fill="#9aa0a4"/><rect x="29.2" y="26.1" width="5.2" height="0.7" fill="#9aa0a4"/><rect x="29.2" y="27.6" width="5.2" height="0.7" fill="#9aa0a4"/><rect x="29.2" y="29.1" width="5.2" height="0.7" fill="#9aa0a4"/><rect x="29.2" y="30.6" width="5.2" height="0.7" fill="#9aa0a4"/><rect x="29.2" y="32.1" width="5.2" height="0.7" fill="#9aa0a4"/><rect x="29.2" y="33.6" width="5.2" height="0.7" fill="#9aa0a4"/>
<rect x="30.8" y="0.6" width="2" height="34" fill="#50565a" opacity="0.6"/>
<ellipse cx="31.8" cy="7.1" rx="3" ry="3.6" fill="#8f9aa2"/>
<ellipse cx="31.8" cy="6.6" rx="1.8" ry="2.2" fill="#b8c8d2"/>
<ellipse cx="31.8" cy="17.6" rx="2" ry="2.3" fill="#8a969e"/>
<path d="M36.9,0.6 L36.9,16.1 Q36.9,19.6 40.4,19.6 L55.9,19.6 Z" fill="#000" opacity="0.30" filter="url(#fs)" transform="translate(-0.6,1.4)"/><path d="M36.9,0.6 L36.9,16.1 Q36.9,19.6 40.4,19.6 L55.9,19.6 Z" fill="url(#fold)"/><path d="M37.199999999999996,0.8999999999999999 L55.6,19.3" stroke="#fff" stroke-width="0.8"/>
<text x="31.900000000000002" y="58.6" text-anchor="middle" font-family="Liberation Sans" font-size="9.6" fill="#777">ZIP</text>
</svg></div>
<div class="th" style="left:517.0px;top:298.9px;width:63.8px;height:48.1px;background:linear-gradient(to bottom left,#dadada 0%,#ededed 45%,#fbfbfb 100%);border-radius:2.5px;box-shadow:0 0 0 0.8px rgba(0,0,0,0.55),0 1px 2px rgba(0,0,0,0.45);"><svg style="position:absolute;left:4.5px;top:17.5px" width="13" height="5" viewBox="0 0 13 5"><path d="M0.5,3.5 Q0.5,2 2.5,1.8 L4.5,0.6 Q6,0 8,0.3 L10.5,1.5 Q12.6,1.8 12.6,3.4 L12.4,4 L0.8,4 Z" fill="#cc1a1a"/><circle cx="3" cy="4" r="0.9" fill="#222"/><circle cx="10" cy="4" r="0.9" fill="#222"/></svg><div style="position:absolute;left:19.6px;top:16.4px;font:bold 5.0px/6px Liberation Sans;color:#111;white-space:nowrap">Open Web Apps</div><div style="position:absolute;left:0;top:33.5px;width:64px;text-align:center;font:2.2px/2.4px Liberation Sans;color:#444">Geoffrey Litt<br>SDG Meeting<br>Nov 8, 2019</div></div>
<div class="th" style="left:636.4px;top:290.9px;width:64.6px;height:64.3px;background:#fff;box-shadow:0 0 0 0.8px rgba(0,0,0,0.55),0 1px 2px rgba(0,0,0,0.45);"><div style="position:absolute;left:2.8px;top:2.8px;right:2.8px;bottom:2.8px;border:1.4px solid #c9c9c9"><div style="position:absolute;left:4.0px;top:25.6px;width:2px;height:1.2px;background:#d0d0d0"></div><div style="position:absolute;left:7.4px;top:25.6px;width:2px;height:1.2px;background:#d0d0d0"></div><div style="position:absolute;left:10.8px;top:25.6px;width:2px;height:1.2px;background:#c4c4c4"></div><div style="position:absolute;left:14.2px;top:25.6px;width:2px;height:1.2px;background:#c4c4c4"></div><div style="position:absolute;left:17.6px;top:25.6px;width:2px;height:1.2px;background:#c4c4c4"></div><div style="position:absolute;left:21.0px;top:25.6px;width:2px;height:1.2px;background:#c4c4c4"></div><div style="position:absolute;left:24.4px;top:25.6px;width:2px;height:1.2px;background:#c4c4c4"></div><div style="position:absolute;left:27.8px;top:25.6px;width:2px;height:1.2px;background:#c4c4c4"></div><div style="position:absolute;left:31.2px;top:25.6px;width:2px;height:1.2px;background:#c4c4c4"></div><div style="position:absolute;left:34.599999999999994px;top:25.6px;width:2px;height:1.2px;background:#c4c4c4"></div><div style="position:absolute;left:38.0px;top:25.6px;width:2px;height:1.2px;background:#c4c4c4"></div><div style="position:absolute;left:41.4px;top:25.6px;width:2px;height:1.2px;background:#c4c4c4"></div><div style="position:absolute;left:44.8px;top:25.6px;width:2px;height:1.2px;background:#c4c4c4"></div><div style="position:absolute;left:48.199999999999996px;top:25.6px;width:2px;height:1.2px;background:#c4c4c4"></div><div style="position:absolute;left:51.6px;top:25.6px;width:2px;height:1.2px;background:#c4c4c4"></div><div style="position:absolute;left:55.0px;top:25.6px;width:2px;height:1.2px;background:#c4c4c4"></div><div style="position:absolute;left:2.0px;top:33.3px;width:1.8px;height:1.2px;background:#d8dcc0"></div><div style="position:absolute;left:4.6px;top:33.3px;width:1.8px;height:1.2px;background:#d8dcc0"></div><div style="position:absolute;left:7.2px;top:33.3px;width:1.8px;height:1.2px;background:#d8dcc0"></div><div style="position:absolute;left:9.8px;top:33.3px;width:1.8px;height:1.2px;background:#d8dcc0"></div><div style="position:absolute;left:12.4px;top:33.3px;width:1.8px;height:1.2px;background:#d8dcc0"></div><div style="position:absolute;left:15.0px;top:33.3px;width:1.8px;height:1.2px;background:#d8dcc0"></div><div style="position:absolute;left:17.6px;top:33.3px;width:1.8px;height:1.2px;background:#d8dcc0"></div><div style="position:absolute;left:20.2px;top:33.3px;width:1.8px;height:1.2px;background:#d8dcc0"></div><div style="position:absolute;left:22.8px;top:33.3px;width:1.8px;height:1.2px;background:#d8dcc0"></div><div style="position:absolute;left:25.400000000000002px;top:33.3px;width:1.8px;height:1.2px;background:#d8dcc0"></div><div style="position:absolute;left:28.0px;top:33.3px;width:1.8px;height:1.2px;background:#d8dcc0"></div><div style="position:absolute;left:30.6px;top:33.3px;width:1.8px;height:1.2px;background:#d8dcc0"></div></div></div>
<div class="th" style="left:756.0px;top:295.3px;width:64.2px;height:55.7px;background:linear-gradient(180deg,#f0f0f0 0%,#f8f8f8 60%,#ffffff 100%);border-radius:2px;box-shadow:0 0 0 0.8px rgba(0,0,0,0.55),0 1px 2px rgba(0,0,0,0.45);"><svg style="position:absolute;left:0;top:0" width="64" height="56" viewBox="0 0 64 56"><path d="M6.4,42.7 L27.6,37 L30,17.5 L45.5,14.2" fill="none" stroke="#c4c4c4" stroke-width="0.6"/></svg><div style="position:absolute;left:31px;top:8.3px;width:12px;height:0.5px;background:#a8a8a8"></div><div style="position:absolute;left:31px;top:10.9px;width:12px;height:0.5px;background:#a8a8a8"></div><div style="position:absolute;left:7.3px;top:32.8px;width:10px;height:0.5px;background:#a8a8a8"></div><div style="position:absolute;left:7.3px;top:35.4px;width:10px;height:0.5px;background:#a8a8a8"></div><div style="position:absolute;left:0;top:0;bottom:0;width:4.2px;background:linear-gradient(90deg,#3a3a3a 0%,#8a8a8a 30%,#2a2a2a 65%,#000 100%)"></div><svg style="position:absolute;right:1px;top:1px;overflow:visible" width="17" height="17" viewBox="0 0 17 17"><defs><filter id="cs" x="-50%" y="-50%" width="200%" height="200%"><feGaussianBlur stdDeviation="1.1"/></filter></defs><path d="M0,0 L0,13 Q0,16.5 3.5,16.5 L17,16.5 Z" fill="#000" opacity="0.32" filter="url(#cs)" transform="translate(-0.5,1)"/><defs><linearGradient id="cfl" x1="0" y1="0" x2="1" y2="1"><stop offset="0" stop-color="#f0f0f0"/><stop offset="0.7" stop-color="#fafafa"/><stop offset="1" stop-color="#ffffff"/></linearGradient></defs><path d="M0,0 L0,13 Q0,16.5 3.5,16.5 L17,16.5 Z" fill="url(#cfl)"/></svg></div>
<div class="th" style="left:882.4px;top:291.1px;width:50.4px;height:63.9px;background:linear-gradient(180deg,#f4f4f4,#fdfdfd);border-radius:2px;box-shadow:0 0 0 0.8px rgba(0,0,0,0.55),0 1px 2px rgba(0,0,0,0.45);"><div style="position:absolute;left:7.6px;top:7.5px;width:24.5px;height:0.9px;background:#a0a0a0"></div><div style="position:absolute;left:9.1px;top:10.1px;width:28px;height:18.3px;border:1px solid #9a9a9a;background:#fbfbfb"></div><div style="position:absolute;left:11.2px;top:12.2px;width:5.5px;height:0.7px;background:#e88080"></div><div style="position:absolute;left:11.2px;top:14.0px;width:5.5px;height:0.7px;background:#e88080"></div><div style="position:absolute;left:11.2px;top:15.8px;width:5.5px;height:0.7px;background:#e8a0a0"></div><div style="position:absolute;left:21px;top:12.8px;width:3px;height:0.6px;background:#f0c070"></div><div style="position:absolute;left:25px;top:13.5px;width:7px;height:0.7px;background:#f0c070"></div><div style="position:absolute;left:9.6px;top:19.6px;width:27px;height:1.6px;background:#e6e6e6"></div><div style="position:absolute;left:9.6px;top:21.4px;width:27px;height:6.5px;background:#f4f4f4"></div><div style="position:absolute;left:10.5px;top:22px;width:4px;height:2.6px;background:#f0a0a0"></div><div style="position:absolute;left:15px;top:21.4px;width:0.6px;height:6.5px;background:#999"></div><div style="position:absolute;left:20px;top:21.4px;width:0.6px;height:6.5px;background:#999"></div><div style="position:absolute;left:24.5px;top:21.4px;width:0.6px;height:6.5px;background:#aaa"></div><div style="position:absolute;left:10px;top:25.2px;width:26px;height:0.5px;background:#aaa"></div><div style="position:absolute;left:9.6px;top:32.5px;width:28.4px;height:19.7px;border:1px solid #9a9a9a;background:#fbfbfb"></div><div style="position:absolute;left:11.8px;top:36.2px;width:5.5px;height:0.7px;background:#e88080"></div><div style="position:absolute;left:11.8px;top:38.2px;width:5.5px;height:0.7px;background:#70a870"></div><div style="position:absolute;left:11.8px;top:40.2px;width:5.5px;height:0.7px;background:#7090d8"></div><div style="position:absolute;left:24px;top:39.6px;width:10px;height:0.7px;background:#f0c070"></div><div style="position:absolute;left:21px;top:41.3px;width:12px;height:0.7px;background:#f0c880"></div><div style="position:absolute;left:10.1px;top:44.5px;width:27.4px;height:7.2px;background:#f0f0f0"></div><div style="position:absolute;left:11px;top:45px;width:3.5px;height:2.6px;background:#f0a0a0"></div><div style="position:absolute;left:16px;top:45px;width:3.5px;height:2.6px;background:#90c890"></div><div style="position:absolute;left:21px;top:45px;width:4px;height:2.6px;background:#e08080"></div><div style="position:absolute;left:21px;top:48px;width:4px;height:2px;background:#7aa0e0"></div><div style="position:absolute;left:15.4px;top:44.5px;width:0.6px;height:7.2px;background:#999"></div><div style="position:absolute;left:20.3px;top:44.5px;width:0.6px;height:7.2px;background:#999"></div><div style="position:absolute;left:25.6px;top:44.5px;width:0.6px;height:7.2px;background:#999"></div><div style="position:absolute;left:10.5px;top:48.8px;width:26px;height:0.5px;background:#aaa"></div><div style="position:absolute;left:0;top:0;bottom:0;width:4.6px;background:linear-gradient(90deg,#3a3a3a 0%,#8a8a8a 30%,#2a2a2a 65%,#000 100%)"></div><svg style="position:absolute;right:5.4px;top:1.4px;overflow:visible" width="16.2" height="16.2" viewBox="0 0 17 17"><defs><filter id="cs" x="-50%" y="-50%" width="200%" height="200%"><feGaussianBlur stdDeviation="1.1"/></filter></defs><path d="M0,0 L0,13 Q0,16.5 3.5,16.5 L17,16.5 Z" fill="#000" opacity="0.32" filter="url(#cs)" transform="translate(-0.5,1)"/><defs><linearGradient id="cfl" x1="0" y1="0" x2="1" y2="1"><stop offset="0" stop-color="#f0f0f0"/><stop offset="0.7" stop-color="#fafafa"/><stop offset="1" stop-color="#ffffff"/></linearGradient></defs><path d="M0,0 L0,13 Q0,16.5 3.5,16.5 L17,16.5 Z" fill="url(#cfl)"/></svg></div>
<div class="th" style="left:995.6px;top:291.0px;width:64.3px;height:63.9px;background:#fff;box-shadow:0 0 0 0.8px rgba(0,0,0,0.55),0 1px 2px rgba(0,0,0,0.45);"><div style="position:absolute;left:2.7px;top:2.7px;right:2.7px;bottom:2.7px;border:1.0px solid #c6c6c6"></div><div style="position:absolute;left:4.7px;top:17.9px;width:10.9px;height:1.2px;background:#8a8a8a"></div><div style="position:absolute;left:4.7px;top:22.3px;width:25.5px;height:10px;border:1px solid #f6c4c4"></div><div style="position:absolute;left:5.0px;top:22.9px;width:5px;height:0.8px;background:#e88a8a"></div><div style="position:absolute;left:6.6px;top:24.4px;width:15.2px;height:1.7px;background:#a2d67c"></div><div style="position:absolute;left:6.6px;top:26.5px;width:15.2px;height:5px;background:#e6e4d2"></div><div style="position:absolute;left:22.7px;top:24.8px;width:1px;height:6px;background:#ddd"></div><div style="position:absolute;left:4.7px;top:32.9px;width:25.5px;height:8.6px;border:1px solid #c8d8f2"></div><div style="position:absolute;left:5.7px;top:34.3px;width:18px;height:0.5px;background:#e2e2e2"></div><div style="position:absolute;left:5.7px;top:35.8px;width:20px;height:0.5px;background:#e2e2e2"></div><div style="position:absolute;left:5.7px;top:37.3px;width:17px;height:0.5px;background:#e2e2e2"></div><div style="position:absolute;left:21.5px;top:36.6px;width:2.2px;height:2.1px;background:#222;border-radius:40%"></div><div style="position:absolute;left:5.0px;top:40.2px;width:5px;height:0.8px;background:#6a98d8"></div><div style="position:absolute;left:30.5px;top:23.2px;width:5.5px;height:0.8px;background:#9a9a9a"></div><div style="position:absolute;left:36.2px;top:23.8px;width:1.5px;height:0.5px;background:#e88080"></div><div style="position:absolute;left:30.5px;top:25.7px;width:5.5px;height:0.8px;background:#9a9a9a"></div><div style="position:absolute;left:36.2px;top:26.3px;width:1.5px;height:0.5px;background:#e88080"></div><div style="position:absolute;left:30.5px;top:28.5px;width:5.5px;height:0.8px;background:#9a9a9a"></div><div style="position:absolute;left:36.2px;top:29.1px;width:1.5px;height:0.5px;background:#e88080"></div><div style="position:absolute;left:30.7px;top:30.1px;width:7px;height:5px;border:1px solid #e8e8e8"></div><div style="position:absolute;left:30.7px;top:36.0px;width:7px;height:4.6px;border:1px solid #e8e8e8"></div><div style="position:absolute;left:30.7px;top:36.2px;width:6px;height:0.5px;background:#8fb0e0"></div><div style="position:absolute;left:30.7px;top:40.6px;width:6px;height:0.5px;background:#8fb0e0"></div><div style="position:absolute;left:39.8px;top:19.5px;width:19.6px;height:23px;border:1px solid #efefef"></div><div style="position:absolute;left:40.7px;top:20.6px;width:2px;height:0.7px;background:#888"></div><div style="position:absolute;left:44.0px;top:21.6px;width:14.6px;height:4.6px;border:1px solid #ececec"></div><div style="position:absolute;left:44.7px;top:22.6px;width:3px;height:0.6px;background:#999"></div><div style="position:absolute;left:44.7px;top:23.9px;width:2.5px;height:0.6px;background:#999"></div><div style="position:absolute;left:41.7px;top:27.8px;width:5px;height:6.5px;border:1px solid #eeeeee"></div><div style="position:absolute;left:42.2px;top:29.3px;width:3.5px;height:0.6px;background:#aaa"></div><div style="position:absolute;left:42.2px;top:31.3px;width:3.5px;height:0.6px;background:#aaa"></div><div style="position:absolute;left:47.7px;top:27.3px;width:6px;height:7px;border:1px solid #eeeeee"></div><div style="position:absolute;left:48.7px;top:30.1px;width:4px;height:0.6px;background:#aaa"></div><div style="position:absolute;left:54.7px;top:27.3px;width:4.5px;height:7px;border:1px solid #eeeeee"></div><div style="position:absolute;left:55.2px;top:30.3px;width:3px;height:0.6px;background:#aaa"></div><div style="position:absolute;left:48.7px;top:35.5px;width:4.5px;height:0.7px;background:#999"></div><div style="position:absolute;left:41.2px;top:37.6px;width:5px;height:0.6px;background:#aaa"></div><div style="position:absolute;left:46.4px;top:36.9px;width:12.5px;height:5px;border:1px solid #eeeeee"></div><div style="position:absolute;left:47.2px;top:38.3px;width:5px;height:0.6px;background:#999"></div><div style="position:absolute;left:47.2px;top:39.7px;width:7px;height:0.6px;background:#aaa"></div></div>
<div class="ib" style="left:37.5px;top:428.8px"><svg width="64" height="64" viewBox="0 0 64 64"><defs><linearGradient id="pg" x1="0" y1="0" x2="1" y2="1"><stop offset="0" stop-color="#f4f4f4"/><stop offset="1" stop-color="#e6e6e6"/></linearGradient>
<linearGradient id="fold" x1="0" y1="0" x2="1" y2="1"><stop offset="0" stop-color="#f2f2f2"/><stop offset="0.6" stop-color="#fbfbfb"/><stop offset="1" stop-color="#ffffff"/></linearGradient>
<filter id="fs" x="-50%" y="-50%" width="200%" height="200%"><feGaussianBlur stdDeviation="1.1"/></filter></defs>
<path d="M11.1,0.8 L37.2,0.8 L55.7,19.3 L55.7,61.1 Q55.7,63.6 53.2,63.6 L11.1,63.6 Q8.6,63.6 8.6,61.1 L8.6,3.3 Q8.6,0.8 11.1,0.8 Z" fill="url(#pg)" stroke="#111" stroke-opacity="0.35" stroke-width="0.8"/>
<path d="M37.2,0.8 L37.2,15.8 Q37.2,19.3 40.7,19.3 L55.7,19.3 Z" fill="#000" opacity="0.30" filter="url(#fs)" transform="translate(-0.6,1.4)"/><path d="M37.2,0.8 L37.2,15.8 Q37.2,19.3 40.7,19.3 L55.7,19.3 Z" fill="url(#fold)"/><path d="M37.5,1.1 L55.400000000000006,19.0" stroke="#fff" stroke-width="0.8"/>
</svg></div>
<div class="ib" style="left:157.3px;top:428.8px"><svg width="64" height="64" viewBox="0 0 64 64"><defs><linearGradient id="pg" x1="0" y1="0" x2="1" y2="1"><stop offset="0" stop-color="#f4f4f4"/><stop offset="1" stop-color="#e6e6e6"/></linearGradient>
<linearGradient id="fold" x1="0" y1="0" x2="1" y2="1"><stop offset="0" stop-color="#f2f2f2"/><stop offset="0.6" stop-color="#fbfbfb"/><stop offset="1" stop-color="#ffffff"/></linearGradient>
<filter id="fs" x="-50%" y="-50%" width="200%" height="200%"><feGaussianBlur stdDeviation="1.1"/></filter></defs>
<path d="M11.1,0.8 L37.2,0.8 L55.7,19.3 L55.7,61.1 Q55.7,63.6 53.2,63.6 L11.1,63.6 Q8.6,63.6 8.6,61.1 L8.6,3.3 Q8.6,0.8 11.1,0.8 Z" fill="url(#pg)" stroke="#111" stroke-opacity="0.35" stroke-width="0.8"/>
<path d="M37.2,0.8 L37.2,15.8 Q37.2,19.3 40.7,19.3 L55.7,19.3 Z" fill="#000" opacity="0.30" filter="url(#fs)" transform="translate(-0.6,1.4)"/><path d="M37.2,0.8 L37.2,15.8 Q37.2,19.3 40.7,19.3 L55.7,19.3 Z" fill="url(#fold)"/><path d="M37.5,1.1 L55.400000000000006,19.0" stroke="#fff" stroke-width="0.8"/>
</svg></div>
<div class="ib" style="left:277.1px;top:428.8px"><svg width="64" height="64" viewBox="0 0 64 64"><defs><linearGradient id="pg" x1="0" y1="0" x2="1" y2="1"><stop offset="0" stop-color="#f4f4f4"/><stop offset="1" stop-color="#e6e6e6"/></linearGradient>
<linearGradient id="fold" x1="0" y1="0" x2="1" y2="1"><stop offset="0" stop-color="#f2f2f2"/><stop offset="0.6" stop-color="#fbfbfb"/><stop offset="1" stop-color="#ffffff"/></linearGradient>
<filter id="fs" x="-50%" y="-50%" width="200%" height="200%"><feGaussianBlur stdDeviation="1.1"/></filter></defs>
<path d="M11.1,0.8 L37.2,0.8 L55.7,19.3 L55.7,61.1 Q55.7,63.6 53.2,63.6 L11.1,63.6 Q8.6,63.6 8.6,61.1 L8.6,3.3 Q8.6,0.8 11.1,0.8 Z" fill="url(#pg)" stroke="#111" stroke-opacity="0.35" stroke-width="0.8"/>
<path d="M37.2,0.8 L37.2,15.8 Q37.2,19.3 40.7,19.3 L55.7,19.3 Z" fill="#000" opacity="0.30" filter="url(#fs)" transform="translate(-0.6,1.4)"/><path d="M37.2,0.8 L37.2,15.8 Q37.2,19.3 40.7,19.3 L55.7,19.3 Z" fill="url(#fold)"/><path d="M37.5,1.1 L55.400000000000006,19.0" stroke="#fff" stroke-width="0.8"/>
</svg></div>
<div class="ib" style="left:396.9px;top:428.8px"><svg width="64" height="64" viewBox="0 0 64 64"><defs><linearGradient id="pg" x1="0" y1="0" x2="1" y2="1"><stop offset="0" stop-color="#f4f4f4"/><stop offset="1" stop-color="#e6e6e6"/></linearGradient>
<linearGradient id="fold" x1="0" y1="0" x2="1" y2="1"><stop offset="0" stop-color="#f2f2f2"/><stop offset="0.6" stop-color="#fbfbfb"/><stop offset="1" stop-color="#ffffff"/></linearGradient>
<filter id="fs" x="-50%" y="-50%" width="200%" height="200%"><feGaussianBlur stdDeviation="1.1"/></filter></defs>
<path d="M11.1,0.8 L37.2,0.8 L55.7,19.3 L55.7,61.1 Q55.7,63.6 53.2,63.6 L11.1,63.6 Q8.6,63.6 8.6,61.1 L8.6,3.3 Q8.6,0.8 11.1,0.8 Z" fill="url(#pg)" stroke="#111" stroke-opacity="0.35" stroke-width="0.8"/>
<path d="M37.2,0.8 L37.2,15.8 Q37.2,19.3 40.7,19.3 L55.7,19.3 Z" fill="#000" opacity="0.30" filter="url(#fs)" transform="translate(-0.6,1.4)"/><path d="M37.2,0.8 L37.2,15.8 Q37.2,19.3 40.7,19.3 L55.7,19.3 Z" fill="url(#fold)"/><path d="M37.5,1.1 L55.400000000000006,19.0" stroke="#fff" stroke-width="0.8"/>
</svg></div>
<div class="ib" style="left:516.7px;top:428.8px"><svg width="64" height="64" viewBox="0 0 64 64"><defs><linearGradient id="pg" x1="0" y1="0" x2="1" y2="1"><stop offset="0" stop-color="#f4f4f4"/><stop offset="1" stop-color="#e6e6e6"/></linearGradient>
<linearGradient id="fold" x1="0" y1="0" x2="1" y2="1"><stop offset="0" stop-color="#f2f2f2"/><stop offset="0.6" stop-color="#fbfbfb"/><stop offset="1" stop-color="#ffffff"/></linearGradient>
<filter id="fs" x="-50%" y="-50%" width="200%" height="200%"><feGaussianBlur stdDeviation="1.1"/></filter></defs>
<path d="M11.1,0.8 L37.2,0.8 L55.7,19.3 L55.7,61.1 Q55.7,63.6 53.2,63.6 L11.1,63.6 Q8.6,63.6 8.6,61.1 L8.6,3.3 Q8.6,0.8 11.1,0.8 Z" fill="url(#pg)" stroke="#111" stroke-opacity="0.35" stroke-width="0.8"/>
<path d="M37.2,0.8 L37.2,15.8 Q37.2,19.3 40.7,19.3 L55.7,19.3 Z" fill="#000" opacity="0.30" filter="url(#fs)" transform="translate(-0.6,1.4)"/><path d="M37.2,0.8 L37.2,15.8 Q37.2,19.3 40.7,19.3 L55.7,19.3 Z" fill="url(#fold)"/><path d="M37.5,1.1 L55.400000000000006,19.0" stroke="#fff" stroke-width="0.8"/>
</svg></div>
<div class="ib" style="left:636.5px;top:428.8px"><svg width="64" height="64" viewBox="0 0 64 64"><defs><linearGradient id="pg" x1="0" y1="0" x2="1" y2="1"><stop offset="0" stop-color="#f4f4f4"/><stop offset="1" stop-color="#e6e6e6"/></linearGradient>
<linearGradient id="fold" x1="0" y1="0" x2="1" y2="1"><stop offset="0" stop-color="#f2f2f2"/><stop offset="0.6" stop-color="#fbfbfb"/><stop offset="1" stop-color="#ffffff"/></linearGradient>
<filter id="fs" x="-50%" y="-50%" width="200%" height="200%"><feGaussianBlur stdDeviation="1.1"/></filter></defs>
<path d="M11.1,0.8 L37.2,0.8 L55.7,19.3 L55.7,61.1 Q55.7,63.6 53.2,63.6 L11.1,63.6 Q8.6,63.6 8.6,61.1 L8.6,3.3 Q8.6,0.8 11.1,0.8 Z" fill="url(#pg)" stroke="#111" stroke-opacity="0.35" stroke-width="0.8"/>
<path d="M37.2,0.8 L37.2,15.8 Q37.2,19.3 40.7,19.3 L55.7,19.3 Z" fill="#000" opacity="0.30" filter="url(#fs)" transform="translate(-0.6,1.4)"/><path d="M37.2,0.8 L37.2,15.8 Q37.2,19.3 40.7,19.3 L55.7,19.3 Z" fill="url(#fold)"/><path d="M37.5,1.1 L55.400000000000006,19.0" stroke="#fff" stroke-width="0.8"/>
</svg></div>
<div class="ib" style="left:756.3px;top:428.8px"><svg width="64" height="64" viewBox="0 0 64 64"><defs><linearGradient id="pg" x1="0" y1="0" x2="1" y2="1"><stop offset="0" stop-color="#f4f4f4"/><stop offset="1" stop-color="#e6e6e6"/></linearGradient>
<linearGradient id="fold" x1="0" y1="0" x2="1" y2="1"><stop offset="0" stop-color="#f2f2f2"/><stop offset="0.6" stop-color="#fbfbfb"/><stop offset="1" stop-color="#ffffff"/></linearGradient>
<filter id="fs" x="-50%" y="-50%" width="200%" height="200%"><feGaussianBlur stdDeviation="1.1"/></filter></defs>
<path d="M11.1,0.8 L37.2,0.8 L55.7,19.3 L55.7,61.1 Q55.7,63.6 53.2,63.6 L11.1,63.6 Q8.6,63.6 8.6,61.1 L8.6,3.3 Q8.6,0.8 11.1,0.8 Z" fill="url(#pg)" stroke="#111" stroke-opacity="0.35" stroke-width="0.8"/>
<path d="M37.2,0.8 L37.2,15.8 Q37.2,19.3 40.7,19.3 L55.7,19.3 Z" fill="#000" opacity="0.30" filter="url(#fs)" transform="translate(-0.6,1.4)"/><path d="M37.2,0.8 L37.2,15.8 Q37.2,19.3 40.7,19.3 L55.7,19.3 Z" fill="url(#fold)"/><path d="M37.5,1.1 L55.400000000000006,19.0" stroke="#fff" stroke-width="0.8"/>
</svg></div>
<div class="th" style="left:875.5px;top:443.8px;width:64.5px;height:33.2px;background:linear-gradient(180deg,#eeeeee,#fbfbfb);border-radius:2px;box-shadow:0 0 0 0.8px rgba(0,0,0,0.55),0 1px 2px rgba(0,0,0,0.45);"><div style="position:absolute;left:4.5px;top:2.5px;width:7px;height:0.8px;background:#666"></div><div style="position:absolute;left:4.5px;top:5.2px;width:31px;height:4.3px;background:#f2ecd2"></div><div style="position:absolute;left:5px;top:6.2px;width:29px;height:0.6px;background:#d8d0a8"></div><div style="position:absolute;left:5px;top:8.1px;width:29px;height:0.6px;background:#d8d0a8"></div><div style="position:absolute;left:4.5px;top:15.3px;width:20px;height:0.9px;background:#5aaae0"></div><div style="position:absolute;left:4.5px;top:17.6px;width:20px;height:0.9px;background:#5aaae0"></div><div style="position:absolute;left:4.5px;top:19.9px;width:20px;height:0.9px;background:#5aaae0"></div><div style="position:absolute;left:4.5px;top:22.2px;width:20px;height:0.9px;background:#5aaae0"></div><div style="position:absolute;left:28.8px;top:10.9px;width:34.2px;height:21px;border:1px solid #d4d4d4;border-right:none;background:#f6f6f6"></div><div style="position:absolute;left:29.5px;top:11.6px;width:33px;height:1.6px;background:#e2e2e2"></div><div style="position:absolute;left:30px;top:14.8px;width:17px;height:1.2px;background:#888"></div><div style="position:absolute;left:29.5px;top:19.6px;width:33.5px;height:0.6px;background:#cfcfcf"></div><div style="position:absolute;left:29.5px;top:22.1px;width:33.5px;height:0.6px;background:#cfcfcf"></div><div style="position:absolute;left:29.5px;top:24.5px;width:33.5px;height:0.6px;background:#cfcfcf"></div><div style="position:absolute;left:29.5px;top:26px;width:33.5px;height:0.6px;background:#cfcfcf"></div><div style="position:absolute;left:44.7px;top:18.5px;width:0.6px;height:13px;background:#d6d6d6"></div><div style="position:absolute;left:52.5px;top:18.5px;width:0.6px;height:13px;background:#d6d6d6"></div><div style="position:absolute;left:0;top:0;bottom:0;width:4.2px;background:linear-gradient(90deg,#3a3a3a 0%,#8a8a8a 30%,#2a2a2a 65%,#000 100%)"></div><svg style="position:absolute;right:1.1px;top:1.0px;overflow:visible" width="16.2" height="16.2" viewBox="0 0 17 17"><defs><filter id="cs" x="-50%" y="-50%" width="200%" height="200%"><feGaussianBlur stdDeviation="1.1"/></filter></defs><path d="M0,0 L0,13 Q0,16.5 3.5,16.5 L17,16.5 Z" fill="#000" opacity="0.32" filter="url(#cs)" transform="translate(-0.5,1)"/><defs><linearGradient id="cfl" x1="0" y1="0" x2="1" y2="1"><stop offset="0" stop-color="#f0f0f0"/><stop offset="0.7" stop-color="#fafafa"/><stop offset="1" stop-color="#ffffff"/></linearGradient></defs><path d="M0,0 L0,13 Q0,16.5 3.5,16.5 L17,16.5 Z" fill="url(#cfl)"/></svg></div>
<div class="th" style="left:1002.5px;top:428.3px;width:49.6px;height:64.0px;background:#fdfdfd;border-radius:2px;box-shadow:0 0 0 0.8px rgba(0,0,0,0.55),0 1px 2px rgba(0,0,0,0.45);"><div style="position:absolute;left:8.2px;top:5.8px;width:24px;height:1.2px;background:#6a6a6a"></div><div style="position:absolute;left:13px;top:7.8px;width:19px;height:1.4px;background:#555"></div><div style="position:absolute;left:17px;top:10.2px;width:12px;height:0.6px;background:#aaa"></div><div style="position:absolute;left:5.2px;top:12.5px;width:19.5px;height:46.0px;background:repeating-linear-gradient(180deg,#b4b4b4 0px,#c8c8c8 0.7px,#f4f4f4 1.1px,#fdfdfd 1.5px)"></div><div style="position:absolute;left:26.3px;top:12.5px;width:19.5px;height:46.0px;background:repeating-linear-gradient(180deg,#b4b4b4 0px,#c8c8c8 0.7px,#f4f4f4 1.1px,#fdfdfd 1.5px)"></div><div style="position:absolute;left:5.2px;top:28.8px;width:19px;height:1.6px;background:#777"></div><div style="position:absolute;left:5.2px;top:37.4px;width:11px;height:0.6px;background:#9ab8e0"></div><div style="position:absolute;left:5.2px;top:47.5px;width:10px;height:0.6px;background:#9ab8e0"></div><div style="position:absolute;left:47.3px;top:6px;width:0.5px;height:53px;background:#f4c4c4"></div><div style="position:absolute;left:0;top:0;bottom:0;width:4.8px;background:linear-gradient(90deg,#3a3a3a 0%,#8a8a8a 30%,#2a2a2a 65%,#000 100%)"></div><svg style="position:absolute;right:2.2px;top:1.6px;overflow:visible" width="15" height="15" viewBox="0 0 17 17"><defs><filter id="cs" x="-50%" y="-50%" width="200%" height="200%"><feGaussianBlur stdDeviation="1.1"/></filter></defs><path d="M0,0 L0,13 Q0,16.5 3.5,16.5 L17,16.5 Z" fill="#000" opacity="0.32" filter="url(#cs)" transform="translate(-0.5,1)"/><defs><linearGradient id="cfl" x1="0" y1="0" x2="1" y2="1"><stop offset="0" stop-color="#f0f0f0"/><stop offset="0.7" stop-color="#fafafa"/><stop offset="1" stop-color="#ffffff"/></linearGradient></defs><path d="M0,0 L0,13 Q0,16.5 3.5,16.5 L17,16.5 Z" fill="url(#cfl)"/></svg></div>
<div class="lb" style="left:10.5px;top:91.3px">architecture-<br>v02.png</div>
<div class="lb" style="left:130.3px;top:91.3px">architecture.sketc<br>h</div>
<div class="lb" style="left:250.1px;top:91.3px">Board 2019-10-15<br>10.29.20</div>
<div class="lb" style="left:369.9px;top:91.3px">Board 2019-10-15<br>11.21.54</div>
<div class="lb" style="left:489.7px;top:91.3px">convivial-paper</div>
<div class="lb" style="left:609.5px;top:91.3px">convivial-talk-<br>may-5</div>
<div class="lb" style="left:729.3px;top:91.3px">data-join</div>
<div class="lb" style="left:849.1px;top:91.3px">data-<br>ownership.png</div>
<div class="lb" style="left:968.9px;top:91.3px">feb-13-talk</div>
<div class="lb" style="left:10.5px;top:228.6px">flight-booking.pdf</div>
<div class="lb" style="left:130.3px;top:228.6px">flight-<br>booking.sketch</div>
<div class="lb" style="left:250.1px;top:228.6px">IMG_0962.jpg</div>
<div class="lb" style="left:369.9px;top:228.6px">IMG_1751.jpg</div>
<div class="lb" style="left:489.7px;top:228.6px">instacart-<br>department.mov</div>
<div class="lb" style="left:609.5px;top:228.6px">Litt - Wildcard<br>Onward<span class=el>...</span>ised.pdf</div>
<div class="lb" style="left:729.3px;top:228.6px">mar-5-talk</div>
<div class="lb" style="left:849.1px;top:228.6px">MIT-course-<br>catalog.mov</div>
<div class="lb" style="left:968.9px;top:228.6px">MIT-scraping.mov</div>
<div class="lb" style="left:10.5px;top:365.9px">onward-paper</div>
<div class="lb" style="left:130.3px;top:365.9px">onward-paper.zip</div>
<div class="lb" style="left:250.1px;top:365.9px">PX Paper</div>
<div class="lb" style="left:369.9px;top:365.9px">PX Paper.zip</div>
<div class="lb" style="left:489.7px;top:365.9px">SDG Open Apps</div>
<div class="lb" style="left:609.5px;top:365.9px">smoother-<br>scrapers</div>
<div class="lb" style="left:729.3px;top:365.9px">smoother-<br>scrapers.pdf</div>
<div class="lb" style="left:849.1px;top:365.9px">Upload download<br>UI flows<span class=el>...</span>Wildcard</div>
<div class="lb" style="left:968.9px;top:365.9px">v2-architecture</div>
</div>
<div id="wb"></div>
</body></html>
